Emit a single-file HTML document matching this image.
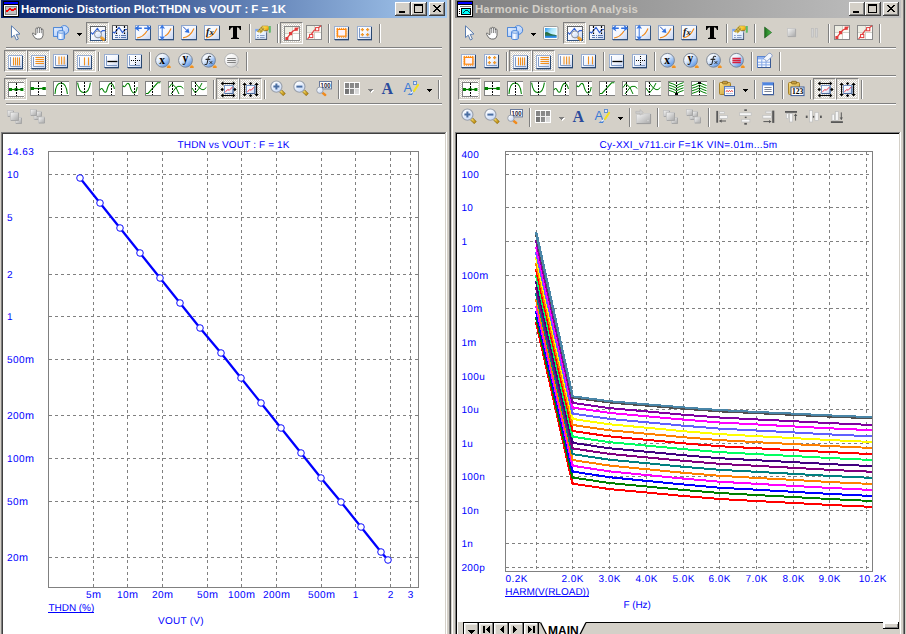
<!DOCTYPE html>
<html><head><meta charset="utf-8"><title>Harmonic Distortion</title>
<style>
html,body{margin:0;padding:0}
body{width:906px;height:634px;background:#d4d0c8;position:relative;overflow:hidden;font-family:"Liberation Sans",sans-serif}
body>div,body>svg{position:absolute}
.ic{position:absolute;overflow:visible}
.ttl{font-weight:bold;font-size:11.4px;line-height:14px;white-space:nowrap;letter-spacing:0px}
.cb{width:16px;height:14px;background:#d4d0c8;box-sizing:border-box;box-shadow:inset -1px -1px 0 #404040,inset 1px 1px 0 #fff,inset -2px -2px 0 #808080}
.cb svg{display:block}
.sb{width:15px;height:11px;background:#d4d0c8;box-shadow:inset -1px 0 0 #000,inset -2px 0 0 #808080,inset 1px 1px 0 #fff,inset 2px 2px 0 #ebe9e4}
.sb svg{display:block}
.chk{width:23px;height:22px;box-sizing:border-box;border:1px solid;border-color:#808080 #fff #fff #808080;box-shadow:inset 0 0 0 1px #d4d0c8;
background-color:#fff;background-image:linear-gradient(45deg,#d4d0c8 25%,transparent 25%,transparent 75%,#d4d0c8 75%),linear-gradient(45deg,#d4d0c8 25%,transparent 25%,transparent 75%,#d4d0c8 75%);background-size:2px 2px;background-position:0 0,1px 1px}
</style></head><body>
<svg width="0" height="0" style="position:absolute"><defs>

<linearGradient id="gPanel" x1="0" y1="0" x2="1" y2="1"><stop offset="0" stop-color="#ffffff"/><stop offset="0.5" stop-color="#f4f7fe"/><stop offset="1" stop-color="#c4d2f0"/></linearGradient>
<linearGradient id="gBall" x1="0.15" y1="0.1" x2="0.85" y2="0.95"><stop offset="0" stop-color="#ffffff"/><stop offset="0.35" stop-color="#e4eefc"/><stop offset="1" stop-color="#4f8ee6"/></linearGradient>
<linearGradient id="gBallG" x1="0.15" y1="0.1" x2="0.85" y2="0.95"><stop offset="0" stop-color="#ffffff"/><stop offset="0.5" stop-color="#f0f0f0"/><stop offset="1" stop-color="#c8c8c8"/></linearGradient>
<linearGradient id="gGlass" x1="0.2" y1="0.1" x2="0.8" y2="0.9"><stop offset="0" stop-color="#ffffff"/><stop offset="1" stop-color="#c8daf8"/></linearGradient>
<linearGradient id="gGray" x1="0" y1="0" x2="1" y2="1"><stop offset="0" stop-color="#f4f4f4"/><stop offset="1" stop-color="#a8a8a8"/></linearGradient>
<linearGradient id="gShape" x1="0" y1="0" x2="1" y2="1"><stop offset="0" stop-color="#e8f1ff"/><stop offset="1" stop-color="#a9c8f8"/></linearGradient>
<linearGradient id="gCyl" x1="0" y1="0" x2="1" y2="0"><stop offset="0" stop-color="#b8d2fb"/><stop offset="0.4" stop-color="#ffffff"/><stop offset="1" stop-color="#8ab2f0"/></linearGradient>
<linearGradient id="gGold" x1="0" y1="0" x2="1" y2="1"><stop offset="0" stop-color="#f6dc6a"/><stop offset="1" stop-color="#b8860b"/></linearGradient>
<linearGradient id="gPic" x1="0" y1="0" x2="0" y2="1"><stop offset="0" stop-color="#bfe6fb"/><stop offset="0.45" stop-color="#58b4ee"/><stop offset="0.6" stop-color="#2f7a4a"/><stop offset="1" stop-color="#1f6fd0"/></linearGradient>
<linearGradient id="gSky" x1="0" y1="0" x2="1" y2="0.6"><stop offset="0" stop-color="#2f98f0"/><stop offset="0.5" stop-color="#a8e4fb"/><stop offset="1" stop-color="#dffaff"/></linearGradient><linearGradient id="gWater" x1="0" y1="0" x2="0" y2="1"><stop offset="0" stop-color="#1f7ad8"/><stop offset="1" stop-color="#4aa4f0"/></linearGradient>
<linearGradient id="gDoc" x1="0" y1="0" x2="1" y2="1"><stop offset="0" stop-color="#ffffff"/><stop offset="1" stop-color="#d4e4fb"/></linearGradient><linearGradient id="gHand" x1="0" y1="0" x2="1" y2="0.6"><stop offset="0" stop-color="#fbe460"/><stop offset="0.6" stop-color="#f8c830"/><stop offset="1" stop-color="#ee9a10"/></linearGradient><pattern id="pHatch" width="1.4" height="1.4" patternUnits="userSpaceOnUse"><rect x="0" y="0" width="0.7" height="0.7" fill="#8a6a18"/><rect x="0.7" y="0.7" width="0.7" height="0.7" fill="#8a6a18"/></pattern>
<linearGradient id="gPlay" x1="0" y1="0" x2="1" y2="0"><stop offset="0" stop-color="#1d6e1d"/><stop offset="1" stop-color="#4fc24f"/></linearGradient>
<linearGradient id="gCellHi" x1="0" y1="0" x2="1" y2="1"><stop offset="0" stop-color="#000" stop-opacity="0.08"/><stop offset="1" stop-color="#fff" stop-opacity="0.15"/></linearGradient>
<linearGradient id="gCell" x1="0" y1="0" x2="1" y2="1"><stop offset="0" stop-color="#808080"/><stop offset="0.6" stop-color="#9a9a9a"/><stop offset="1" stop-color="#dcdcdc"/></linearGradient>
<linearGradient id="gClip" x1="0" y1="0" x2="1" y2="1"><stop offset="0" stop-color="#f8e08a"/><stop offset="1" stop-color="#c89a2a"/></linearGradient>

<symbol id="appL" viewBox="0 0 16 16" overflow="visible"><g shape-rendering="crispEdges"><rect x="0" y="0" width="16" height="16" fill="#000"/><rect x="1" y="1" width="14" height="2" fill="#0000ff"/><rect x="1" y="4" width="14" height="11" fill="#fff"/><rect x="2" y="5" width="12" height="9" fill="#808080"/><rect x="3" y="6" width="10" height="7" fill="#c0c0c0"/><path d="M3 9h2v2h-2zM5 8h1v2h-1zM6 7h2v2h-2zM8 8h3v2h-3zM11 7h2v2h-2z" fill="#ff0000"/></g></symbol>
<symbol id="appR" viewBox="0 0 16 16" overflow="visible"><g shape-rendering="crispEdges"><rect x="0" y="0" width="16" height="16" fill="#000"/><rect x="1" y="1" width="14" height="2" fill="#0000ff"/><rect x="1" y="4" width="14" height="11" fill="#fff"/><rect x="3" y="5" width="11" height="1" fill="#808080"/><rect x="2" y="8" width="1" height="1" fill="#000"/><rect x="2" y="10" width="1" height="1" fill="#000"/><rect x="2" y="12" width="1" height="1" fill="#000"/><rect x="4" y="7" width="10" height="7" fill="#000"/><rect x="5" y="8" width="8" height="5" fill="#00ffff"/><path d="M6 12h1v-1h1v-1h3v1h1v1h1v-1h-1v-1h-1v-1h-3v1h-1v1h-1z" fill="#004040"/></g></symbol>
<symbol id="arrow" viewBox="0 0 16 16" overflow="visible"><path d="M4.5 0.8 L4.5 12.6 L7.2 10.2 L9.4 15 L11.4 14 L9.2 9.4 L13 9 Z" fill="#fff" stroke="#5a7cae" stroke-width="1" stroke-linejoin="round"/></symbol>
<symbol id="hand" viewBox="0 0 16 16" overflow="visible"><g fill="#fff" stroke="#5c5c5c" stroke-width="0.9" stroke-linejoin="round"><path d="M4.9 9.6 L3.4 8 Q2.6 7.6 2.5 8.6 Q2.6 9.6 3.6 11 Q5 13.9 7.4 14 H10 Q12.6 13.6 13 10.4 V5 Q13 4 12.1 4 Q11.3 4 11.3 5 V3.6 Q11.3 2.7 10.4 2.7 Q9.5 2.7 9.5 3.6 V3.2 Q9.5 2.3 8.6 2.3 Q7.7 2.3 7.7 3.2 V3.8 Q7.7 3 6.8 3 Q5.9 3 5.9 3.9 V9.6 Z"/></g><path d="M7.7 4v4.2M9.5 3.6v4.4M11.3 5v3.2" stroke="#6e6e6e" stroke-width="0.8"/></symbol>
<symbol id="shapes" viewBox="0 0 16 16" overflow="visible"><circle cx="11.3" cy="5" r="4.4" fill="url(#gShape)" stroke="#3c7cd6" stroke-width="0.9"/><rect x="0.6" y="2.6" width="9" height="8.8" fill="url(#gShape)" stroke="#3c7cd6" stroke-width="0.9"/><path d="M4.6 7 v6.4 a3.4 1.2 0 0 0 6.8 0 V7 a3.4 1.2 0 0 0 -6.8 0 z" fill="url(#gCyl)" stroke="#3c7cd6" stroke-width="0.9"/><ellipse cx="8" cy="7" rx="3.4" ry="1.2" fill="#e8f2ff" stroke="#3c7cd6" stroke-width="0.8"/></symbol>
<symbol id="zoomwin" viewBox="0 0 16 16" overflow="visible"><rect x="0.5" y="0.5" width="15" height="14" fill="url(#gPanel)" stroke="#5f6266"/><path d="M15.5 7v8M0.5 7v8M0.5 14.5h15" stroke="#34547f" stroke-width="1" fill="none"/><path d="M1 6.4 L2.6 8.2 L7.4 2.4 L10.4 6.6 L12.6 4.6 H15" stroke="#3060d4" stroke-width="1.05" fill="none"/><path d="M11.6 11.8 L13.4 13.4" stroke="#e8931a" stroke-width="3" stroke-linecap="round"/><path d="M11.8 11.4 L13.4 12.8" stroke="#f8c060" stroke-width="0.9" stroke-linecap="round"/><circle cx="8" cy="8.4" r="3.5" fill="url(#gGlass)" stroke="#8a8f98" stroke-width="1"/></symbol>
<symbol id="chartgrid" viewBox="0 0 16 16" overflow="visible"><rect x="0.5" y="0.5" width="15" height="14" fill="url(#gPanel)" stroke="#5f6266"/><path d="M15.5 7v8M0.5 7v8M0.5 14.5h15" stroke="#34547f" stroke-width="1" fill="none"/><path d="M1 7 L2.5 8 L7 2.4 L10.5 7.6 L13 4.5 H15" stroke="#2c5cd0" stroke-width="1.2" fill="none"/><path d="M4.5 1v8M12.5 1v8" stroke="#000" stroke-width="1.2" stroke-dasharray="2 1.2"/><path d="M3 10.5h3M7 10.5h1M9 10.5h5M3 12.5h3M7 12.5h1M9 12.5h5" stroke="#5878b0" stroke-width="1"/></symbol>
<symbol id="panx" viewBox="0 0 16 16" overflow="visible"><rect x="0.5" y="0.5" width="15" height="14" fill="url(#gPanel)" stroke="#8ea6cc"/><path d="M15.5 1v14M0.5 14.5h15.5" stroke="#34547f" stroke-width="1" fill="none"/><path d="M1 15.5h15" stroke="#7f8ea6" stroke-width="1" opacity="0.6"/><path d="M2 13 Q8 12.4 12 6" stroke="#f08a1c" stroke-width="1.2" fill="none"/><path d="M-0.4 3.2 L4.4 0 L3.4 2.4 H6.8 V4 H3.4 L4.4 6.4 Z M16.4 3.2 L11.6 0 L12.6 2.4 H9.2 V4 H12.6 L11.6 6.4 Z" fill="#2f6fe0"/></symbol>
<symbol id="pany" viewBox="0 0 16 16" overflow="visible"><rect x="0.5" y="0.5" width="15" height="14" fill="url(#gPanel)" stroke="#8ea6cc"/><path d="M15.5 1v14M0.5 14.5h15.5" stroke="#34547f" stroke-width="1" fill="none"/><path d="M1 15.5h15" stroke="#7f8ea6" stroke-width="1" opacity="0.6"/><path d="M7 11 Q10.6 9 13 3.4" stroke="#f08a1c" stroke-width="1.2" fill="none"/><path d="M4.2 -0.4 L1.4 3.8 L3.7 3.2 V11.8 L1.4 11.2 L4.2 15.4 L7 11.2 L4.7 11.8 V3.2 L7 3.8 Z" fill="#3a78e4"/></symbol>
<symbol id="panxy" viewBox="0 0 16 16" overflow="visible"><rect x="0.5" y="0.5" width="15" height="14" fill="url(#gPanel)" stroke="#8ea6cc"/><path d="M15.5 1v14M0.5 14.5h15.5" stroke="#34547f" stroke-width="1" fill="none"/><path d="M1 15.5h15" stroke="#7f8ea6" stroke-width="1" opacity="0.6"/><path d="M2 12.8 Q9 12 13 3.4" stroke="#f08a1c" stroke-width="1.2" fill="none"/><path d="M2 1.6 L6 5.6" stroke="#2050c0" stroke-width="1"/><path d="M8.4 8 L3.6 7 L7.4 3.2 Z" fill="#2f6fe0"/></symbol>
<symbol id="fx" viewBox="0 0 16 16" overflow="visible"><rect x="0.5" y="0.5" width="15" height="14" fill="url(#gPanel)" stroke="#8ea6cc"/><path d="M15.5 1v14M0.5 14.5h15.5" stroke="#34547f" stroke-width="1" fill="none"/><path d="M1 15.5h15" stroke="#7f8ea6" stroke-width="1" opacity="0.6"/><path d="M2 13 Q9 12 13 3.6" stroke="#f08a1c" stroke-width="1.2" fill="none"/><text x="2" y="9.8" font-family="Liberation Serif, serif" font-style="italic" font-weight="bold" font-size="10.4px" fill="#111">f</text><text x="5.6" y="10.2" font-family="Liberation Serif, serif" font-style="italic" font-weight="bold" font-size="8.6px" fill="#111">x</text></symbol>
<symbol id="T" viewBox="0 0 16 16" overflow="visible"><path d="M2 1 H14 V5 H13 Q12.6 2.4 10 2.2 V12 Q10 13 12 13 V14 H4 V13 Q6 13 6 12 V2.2 Q3.4 2.4 3 5 H2 Z" fill="#000"/></symbol>
<symbol id="props" viewBox="0 0 16 16" overflow="visible"><rect x="0.5" y="4.3" width="11" height="10" fill="url(#gDoc)" stroke="#a8c0e8"/><rect x="0.4" y="4" width="4.6" height="2.4" fill="#7aa4f0"/><path d="M11.6 7.4V14.6" stroke="#4a5a74" stroke-width="0.9"/><path d="M0.3 14.45H12" stroke="#3a4a60" stroke-width="0.9"/><path d="M2 10.5h1.8M5 10.5h4.6M2 12.5h1.8M5 12.5h4.6" stroke="#8aa0c8" stroke-width="1"/><path d="M9.2 5.7H12.6" stroke="#2a2a2a" stroke-width="0.9"/><path d="M7.2 0.9 H12.4 Q14 1.1 13.9 3.3 Q13.7 5.3 12.2 5.4 H9.4 L7 3.8 Z" fill="url(#gHand)" stroke="#9a7410" stroke-width="0.4"/><path d="M7.4 0.9 L10 4.6 L5.6 8.4 L4.5 7 L3.1 7.4 L2.1 6.3 L6 2 Z" fill="#f4dc6a"/><path d="M7.4 0.9 L10 4.6 L5.6 8.4 L4.5 7 L3.1 7.4 L2.1 6.3 L6 2 Z" fill="url(#pHatch)"/><rect x="13.9" y="1" width="1.7" height="6.6" fill="#36b048"/><rect x="13.9" y="1" width="0.6" height="6.6" fill="#7ad088"/></symbol>
<symbol id="pts1" viewBox="0 0 16 16" overflow="visible"><rect x="0.5" y="0.5" width="15" height="14" fill="#fbfaf4" stroke="#8a8a8a"/><rect x="1" y="1" width="7" height="7" fill="#eeeee4"/><rect x="8" y="8" width="7" height="6" fill="#ffffff"/><path d="M8.5 1v13M1 7.5h14" stroke="#d2d2c8" stroke-width="1"/><path d="M2 13.4 L6 8.4 Q8 4.6 12.6 3.2 L14.6 1.6" stroke="#e23a3a" stroke-width="1.2" fill="none"/><rect x="1.4" y="11" width="3" height="3" fill="#e23a3a"/><rect x="5" y="6" width="3.2" height="3.2" fill="#e23a3a"/><rect x="10.6" y="1.6" width="3.2" height="3.2" fill="#e23a3a"/></symbol>
<symbol id="pts2" viewBox="0 0 16 16" overflow="visible"><rect x="0.5" y="0.5" width="15" height="14" fill="#fbfaf4" stroke="#8a8a8a"/><rect x="1" y="1" width="7" height="7" fill="#eeeee4"/><rect x="8" y="8" width="7" height="6" fill="#ffffff"/><path d="M8.5 1v13M1 7.5h14" stroke="#d2d2c8" stroke-width="1"/><path d="M1.6 14 L6 8.4 Q8 4.6 12 3 L15 0.8" stroke="#e23a3a" stroke-width="1.2" fill="none"/><rect x="3.6" y="9.4" width="3.2" height="3.2" fill="#fff" stroke="#e23a3a" stroke-width="1"/><rect x="9.6" y="2.6" width="3.2" height="3.2" fill="#fff" stroke="#e23a3a" stroke-width="1"/></symbol>
<symbol id="frame1" viewBox="0 0 16 16" overflow="visible"><rect x="0.5" y="1.5" width="14" height="13" fill="url(#gPanel)" stroke="#9bb0d2"/><path d="M14.5 2v13M0.5 14.5h14.5" stroke="#2a4870" stroke-width="1" fill="none"/><path d="M1 15.4h14" stroke="#5a6f90" stroke-width="0.8" opacity="0.7"/><rect x="3.6" y="4.4" width="8.2" height="6.8" fill="#fdf4fb" stroke="#ff8a10" stroke-width="1.2"/><path d="M3 3.4h9.6M3 12.2h9.6" stroke="#ff8a10" stroke-width="1" stroke-dasharray="1 1"/><path d="M2.6 3.6v8.6M12.8 3.6v8.6" stroke="#ff8a10" stroke-width="1" stroke-dasharray="1 1"/></symbol>
<symbol id="frame2" viewBox="0 0 16 16" overflow="visible"><rect x="0.5" y="1.5" width="14" height="13" fill="url(#gPanel)" stroke="#9bb0d2"/><path d="M14.5 2v13M0.5 14.5h14.5" stroke="#2a4870" stroke-width="1" fill="none"/><path d="M1 15.4h14" stroke="#5a6f90" stroke-width="0.8" opacity="0.7"/><path d="M2.5 3v9.5h10.5" stroke="#7f9ac6" stroke-width="1" fill="none"/><path d="M3.8000000000000003 4.6h3.2M5.4 2.9999999999999996v3.2" stroke="#f09a30" stroke-width="1.3"/><path d="M9.0 4.6h3.2M10.6 2.9999999999999996v3.2" stroke="#f09a30" stroke-width="1.3"/><path d="M3.8000000000000003 9.6h3.2M5.4 8.0v3.2" stroke="#f09a30" stroke-width="1.3"/><path d="M9.0 9.6h3.2M10.6 8.0v3.2" stroke="#f09a30" stroke-width="1.3"/></symbol>
<symbol id="bars4" viewBox="0 0 16 16" overflow="visible"><rect x="0.5" y="1.5" width="14" height="13" fill="url(#gPanel)" stroke="#9bb0d2"/><path d="M14.5 2v13M0.5 14.5h14.5" stroke="#2a4870" stroke-width="1" fill="none"/><path d="M1 15.4h14" stroke="#5a6f90" stroke-width="0.8" opacity="0.7"/><path d="M2.5 3v9.5h10.5" stroke="#7f9ac6" stroke-width="1" fill="none"/><path d="M5.5 3.4v8" stroke="#f09020" stroke-width="1.1"/><path d="M7.5 3.4v8" stroke="#f09020" stroke-width="1.1"/><path d="M9.5 3.4v8" stroke="#f09020" stroke-width="1.1"/><path d="M11.5 3.4v8" stroke="#f09020" stroke-width="1.1"/></symbol>
<symbol id="hbars" viewBox="0 0 16 16" overflow="visible"><rect x="0.5" y="1.5" width="14" height="13" fill="url(#gPanel)" stroke="#9bb0d2"/><path d="M14.5 2v13M0.5 14.5h14.5" stroke="#2a4870" stroke-width="1" fill="none"/><path d="M1 15.4h14" stroke="#5a6f90" stroke-width="0.8" opacity="0.7"/><path d="M2.5 3v9.5h10.5" stroke="#7f9ac6" stroke-width="1" fill="none"/><path d="M4.4 3.5h8.6" stroke="#f09020" stroke-width="1.1"/><path d="M4.4 5.5h8.6" stroke="#f09020" stroke-width="1.1"/><path d="M4.4 7.5h8.6" stroke="#f09020" stroke-width="1.1"/><path d="M4.4 9.5h8.6" stroke="#f09020" stroke-width="1.1"/></symbol>
<symbol id="bars3" viewBox="0 0 16 16" overflow="visible"><rect x="0.5" y="1.5" width="14" height="13" fill="url(#gPanel)" stroke="#9bb0d2"/><path d="M14.5 2v13M0.5 14.5h14.5" stroke="#2a4870" stroke-width="1" fill="none"/><path d="M1 15.4h14" stroke="#5a6f90" stroke-width="0.8" opacity="0.7"/><path d="M2.5 3v9.5h10.5" stroke="#7f9ac6" stroke-width="1" fill="none"/><path d="M6 3.4v8" stroke="#f09020" stroke-width="1.1"/><path d="M8.6 3.4v8" stroke="#f09020" stroke-width="1.1"/><path d="M11.2 3.4v8" stroke="#f09020" stroke-width="1.1"/></symbol>
<symbol id="bars2" viewBox="0 0 16 16" overflow="visible"><rect x="0.5" y="1.5" width="14" height="13" fill="url(#gPanel)" stroke="#9bb0d2"/><path d="M14.5 2v13M0.5 14.5h14.5" stroke="#2a4870" stroke-width="1" fill="none"/><path d="M1 15.4h14" stroke="#5a6f90" stroke-width="0.8" opacity="0.7"/><path d="M2.5 3v9.5h10.5" stroke="#7f9ac6" stroke-width="1" fill="none"/><path d="M7.5 3.4v8" stroke="#f09020" stroke-width="1.1"/><path d="M11.5 3.4v8" stroke="#f09020" stroke-width="1.1"/></symbol>
<symbol id="hline" viewBox="0 0 16 16" overflow="visible"><rect x="0.5" y="1.5" width="14" height="13" fill="url(#gPanel)" stroke="#9bb0d2"/><path d="M14.5 2v13M0.5 14.5h14.5" stroke="#2a4870" stroke-width="1" fill="none"/><path d="M1 15.4h14" stroke="#5a6f90" stroke-width="0.8" opacity="0.7"/><path d="M2.5 3v9.5h10.5" stroke="#7f9ac6" stroke-width="1" fill="none"/><path d="M3.4 8.5h10" stroke="#000" stroke-width="1.3"/></symbol>
<symbol id="cross" viewBox="0 0 16 16" overflow="visible"><rect x="0.5" y="1.5" width="14" height="13" fill="url(#gPanel)" stroke="#9bb0d2"/><path d="M14.5 2v13M0.5 14.5h14.5" stroke="#2a4870" stroke-width="1" fill="none"/><path d="M1 15.4h14" stroke="#5a6f90" stroke-width="0.8" opacity="0.7"/><path d="M2.5 3v9.5h10.5" stroke="#7f9ac6" stroke-width="1" fill="none"/><g fill="#000" shape-rendering="crispEdges"><rect x="4" y="7" width="1" height="1"/><rect x="6" y="7" width="1" height="1"/><rect x="10" y="7" width="1" height="1"/><rect x="12" y="7" width="1" height="1"/><rect x="8" y="3" width="1" height="1"/><rect x="8" y="5" width="1" height="1"/><rect x="8" y="7" width="1" height="1"/><rect x="8" y="9" width="1" height="1"/><rect x="8" y="11" width="1" height="1"/></g></symbol>
<symbol id="bx" viewBox="0 0 16 16" overflow="visible"><circle cx="7.5" cy="7.3" r="6.9" fill="url(#gBall)" stroke="#7d8796" stroke-width="1"/><path d="M11.9 15 V13.6 L13.8 11.7 L15.7 13.6 V15 Z" fill="#f09020"/><path d="M12.6 13.4 L13.8 12.2 L15 13.4" stroke="#f8c070" stroke-width="0.7" fill="none"/><text x="4.2" y="10.6" font-family="Liberation Serif, serif" font-weight="bold" font-size="11.5px" fill="#000">x</text></symbol>
<symbol id="by" viewBox="0 0 16 16" overflow="visible"><circle cx="7.5" cy="7.3" r="6.9" fill="url(#gBall)" stroke="#7d8796" stroke-width="1"/><path d="M11.9 15 V13.6 L13.8 11.7 L15.7 13.6 V15 Z" fill="#f09020"/><path d="M12.6 13.4 L13.8 12.2 L15 13.4" stroke="#f8c070" stroke-width="0.7" fill="none"/><text x="4.6" y="9" font-family="Liberation Serif, serif" font-weight="bold" font-size="11.5px" fill="#000">y</text></symbol>
<symbol id="bfx" viewBox="0 0 16 16" overflow="visible"><circle cx="7.5" cy="7.3" r="6.9" fill="url(#gBall)" stroke="#7d8796" stroke-width="1"/><path d="M11.9 15 V13.6 L13.8 11.7 L15.7 13.6 V15 Z" fill="#f09020"/><path d="M12.6 13.4 L13.8 12.2 L15 13.4" stroke="#f8c070" stroke-width="0.7" fill="none"/><path d="M9.6 3.4 Q7.6 2.6 7.2 5 L6.2 10 Q5.8 12 4 11.4 M5 6.4 H8.8" stroke="#2a2a2a" stroke-width="1.1" fill="none" stroke-linecap="round"/><path d="M8.6 8.2 L11.2 10.8 M11.2 8.2 L8.6 10.8" stroke="#2a2a2a" stroke-width="1"/></symbol>
<symbol id="blines_g" viewBox="0 0 16 16" overflow="visible"><circle cx="7.5" cy="7.3" r="6.9" fill="url(#gBallG)" stroke="#b4b4b4" stroke-width="1"/><path d="M3.2 5.5h8.6M3.2 7.5h8.6M3.2 9.5h8.6" stroke="#808080" stroke-width="1"/><path d="M12 13 L14.6 15" stroke="#c0c0c0" stroke-width="1.2"/></symbol>
<symbol id="blines_r" viewBox="0 0 16 16" overflow="visible"><circle cx="7.5" cy="7.3" r="6.9" fill="url(#gBall)" stroke="#7d8796" stroke-width="1"/><path d="M11.9 15 V13.6 L13.8 11.7 L15.7 13.6 V15 Z" fill="#f09020"/><path d="M12.6 13.4 L13.8 12.2 L15 13.4" stroke="#f8c070" stroke-width="0.7" fill="none"/><path d="M3.4 5.5h8.4M3.4 7.5h8.4M3.4 9.5h8.4" stroke="#d81e3c" stroke-width="1.5"/></symbol>
<symbol id="table" viewBox="0 0 16 16" overflow="visible"><rect x="0.5" y="3.5" width="13" height="11" fill="#f6f9ff" stroke="#5a84d0"/><rect x="1" y="4" width="12" height="2.4" fill="#8fb2f2"/><path d="M4.8 6.4v8M9 6.4v8M1 9.2h12M1 11.9h12" stroke="#86a8e6" stroke-width="1"/><path d="M13.5 4v10.5H1" stroke="#3a5a94" stroke-width="1" fill="none"/><path d="M6.4 5.6 L11.8 0.4 Q13 -0.2 14 0.8 L15 2 Q15.6 3 14.8 3.8 L9.8 8.4 Z" fill="#f4f7fd" stroke="#7a92c4" stroke-width="0.8"/><path d="M7 6 L9.6 8" stroke="#a8b8dc" stroke-width="1"/></symbol>
<symbol id="c1" viewBox="0 0 16 16" overflow="visible"><g shape-rendering="crispEdges"><rect x="0" y="1" width="16" height="13" fill="#fff"/><rect x="0" y="0" width="1" height="15" fill="#808080"/><rect x="0" y="0" width="16" height="1" fill="#808080"/><rect x="0" y="14" width="16" height="1" fill="#808080"/></g><path d="M1 7.5h14" stroke="#008000" stroke-width="1.2"/><rect x="1" y="6" width="3" height="3" fill="#008000"/><rect x="6.6" y="6" width="3" height="3" fill="#008000"/><rect x="12.4" y="6" width="3" height="3" fill="#008000"/><g fill="#000" shape-rendering="crispEdges"><rect x="8" y="1" width="1" height="2"/><rect x="8" y="4" width="1" height="2"/><rect x="8" y="7" width="1" height="2"/><rect x="8" y="10" width="1" height="2"/><rect x="8" y="13" width="1" height="1"/></g></symbol>
<symbol id="c2" viewBox="0 0 16 16" overflow="visible"><g shape-rendering="crispEdges"><rect x="0" y="1" width="16" height="13" fill="#fff"/><rect x="0" y="0" width="1" height="15" fill="#808080"/><rect x="0" y="0" width="16" height="1" fill="#808080"/><rect x="0" y="14" width="16" height="1" fill="#808080"/></g><path d="M1 7.5h14" stroke="#008000" stroke-width="1.2"/><rect x="0.6" y="6" width="3.4" height="3" fill="#008000"/><rect x="12.4" y="6" width="3.4" height="3" fill="#008000"/><g fill="#000" shape-rendering="crispEdges"><rect x="8" y="1" width="1" height="2"/><rect x="8" y="4" width="1" height="2"/><rect x="8" y="7" width="1" height="2"/><rect x="8" y="10" width="1" height="2"/><rect x="8" y="13" width="1" height="1"/></g></symbol>
<symbol id="c3" viewBox="0 0 16 16" overflow="visible"><g shape-rendering="crispEdges"><rect x="0" y="1" width="16" height="13" fill="#fff"/><rect x="0" y="0" width="1" height="15" fill="#808080"/><rect x="0" y="0" width="16" height="1" fill="#808080"/><rect x="0" y="14" width="16" height="1" fill="#808080"/></g><path d="M2 13 Q2.6 2 8 2 T14.4 13" stroke="#008000" stroke-width="1.05" fill="none"/><g fill="#000" shape-rendering="crispEdges"><rect x="8" y="1" width="1" height="2"/><rect x="8" y="4" width="1" height="2"/><rect x="8" y="7" width="1" height="2"/><rect x="8" y="10" width="1" height="2"/><rect x="8" y="13" width="1" height="1"/></g></symbol>
<symbol id="c4" viewBox="0 0 16 16" overflow="visible"><g shape-rendering="crispEdges"><rect x="0" y="1" width="16" height="13" fill="#fff"/><rect x="0" y="0" width="1" height="15" fill="#808080"/><rect x="0" y="0" width="16" height="1" fill="#808080"/><rect x="0" y="14" width="16" height="1" fill="#808080"/></g><path d="M1.6 1.6 Q3 11.6 8 11.6 T14.4 1.6" stroke="#008000" stroke-width="1.05" fill="none"/><g fill="#000" shape-rendering="crispEdges"><rect x="8" y="1" width="1" height="2"/><rect x="8" y="4" width="1" height="2"/><rect x="8" y="7" width="1" height="2"/><rect x="8" y="10" width="1" height="2"/><rect x="8" y="13" width="1" height="1"/></g></symbol>
<symbol id="c5" viewBox="0 0 16 16" overflow="visible"><g shape-rendering="crispEdges"><rect x="0" y="1" width="16" height="13" fill="#fff"/><rect x="0" y="0" width="1" height="15" fill="#808080"/><rect x="0" y="0" width="16" height="1" fill="#808080"/><rect x="0" y="14" width="16" height="1" fill="#808080"/></g><path d="M1 9 Q2.6 6 4.4 9.4 T7.6 10 Q9.6 2 12 2.4 T15.4 8" stroke="#008000" stroke-width="1.05" fill="none"/><g fill="#000" shape-rendering="crispEdges"><rect x="12" y="1" width="1" height="2"/><rect x="12" y="4" width="1" height="2"/><rect x="12" y="7" width="1" height="2"/><rect x="12" y="10" width="1" height="2"/><rect x="12" y="13" width="1" height="1"/></g></symbol>
<symbol id="c6" viewBox="0 0 16 16" overflow="visible"><g shape-rendering="crispEdges"><rect x="0" y="1" width="16" height="13" fill="#fff"/><rect x="0" y="0" width="1" height="15" fill="#808080"/><rect x="0" y="0" width="16" height="1" fill="#808080"/><rect x="0" y="14" width="16" height="1" fill="#808080"/></g><path d="M0.8 4.6 Q2.4 7 4 4 T7.4 3.6 Q9.6 12 12 12 T15.2 6" stroke="#008000" stroke-width="1.05" fill="none"/><g fill="#000" shape-rendering="crispEdges"><rect x="12" y="1" width="1" height="2"/><rect x="12" y="4" width="1" height="2"/><rect x="12" y="7" width="1" height="2"/><rect x="12" y="10" width="1" height="2"/><rect x="12" y="13" width="1" height="1"/></g></symbol>
<symbol id="c7" viewBox="0 0 16 16" overflow="visible"><g shape-rendering="crispEdges"><rect x="0" y="1" width="16" height="13" fill="#fff"/><rect x="0" y="0" width="1" height="15" fill="#808080"/><rect x="0" y="0" width="16" height="1" fill="#808080"/><rect x="0" y="14" width="16" height="1" fill="#808080"/></g><path d="M1 12.4 H3 L12.6 1.8 H15.4" stroke="#008000" stroke-width="1.05" fill="none"/><g fill="#000" shape-rendering="crispEdges"><rect x="7" y="1" width="1" height="2"/><rect x="7" y="4" width="1" height="2"/><rect x="7" y="7" width="1" height="2"/><rect x="7" y="10" width="1" height="2"/><rect x="7" y="13" width="1" height="1"/></g></symbol>
<symbol id="c8" viewBox="0 0 16 16" overflow="visible"><g shape-rendering="crispEdges"><rect x="0" y="1" width="16" height="13" fill="#fff"/><rect x="0" y="0" width="1" height="15" fill="#808080"/><rect x="0" y="0" width="16" height="1" fill="#808080"/><rect x="0" y="14" width="16" height="1" fill="#808080"/></g><path d="M1 6.6 L3.8 2.6 L8 6.6 L10 5.4 H13 L15.4 7.6" stroke="#008000" stroke-width="1" fill="none"/><path d="M3 13 L8 6.6 L11 13" stroke="#008000" stroke-width="1" fill="none"/><g fill="#000" shape-rendering="crispEdges"><rect x="4" y="1" width="1" height="2"/><rect x="4" y="4" width="1" height="2"/><rect x="4" y="7" width="1" height="2"/><rect x="4" y="10" width="1" height="2"/><rect x="4" y="13" width="1" height="1"/></g></symbol>
<symbol id="c9" viewBox="0 0 16 16" overflow="visible"><g shape-rendering="crispEdges"><rect x="0" y="1" width="16" height="13" fill="#fff"/><rect x="0" y="0" width="1" height="15" fill="#808080"/><rect x="0" y="0" width="16" height="1" fill="#808080"/><rect x="0" y="14" width="16" height="1" fill="#808080"/></g><path d="M1 7 L4.4 12 L8.4 7 L11 2" stroke="#008000" stroke-width="1" fill="none"/><path d="M4 1.6 L8.4 7 L11 8.6 H13 L15.4 6.4" stroke="#008000" stroke-width="1" fill="none"/><g fill="#000" shape-rendering="crispEdges"><rect x="4" y="1" width="1" height="2"/><rect x="4" y="4" width="1" height="2"/><rect x="4" y="7" width="1" height="2"/><rect x="4" y="10" width="1" height="2"/><rect x="4" y="13" width="1" height="1"/></g></symbol>
<symbol id="c10" viewBox="0 0 16 16" overflow="visible"><g shape-rendering="crispEdges"><rect x="0" y="1" width="16" height="13" fill="#fff"/><rect x="0" y="0" width="1" height="15" fill="#808080"/><rect x="0" y="0" width="16" height="1" fill="#808080"/><rect x="0" y="14" width="16" height="1" fill="#808080"/></g><path d="M1 1.6 Q5 2.6 8.5 4.6 Q12 2.6 15.6 1.6" stroke="#008000" stroke-width="1" fill="none"/><path d="M1 4.2 Q5 5.2 8.5 7.2 Q12 5.2 15.6 4.2" stroke="#008000" stroke-width="1" fill="none"/><path d="M1 6.8 Q5 7.8 8.5 9.8 Q12 7.8 15.6 6.8" stroke="#008000" stroke-width="1" fill="none"/><path d="M1 9.4 Q5 10.4 8.5 12.4 Q12 10.4 15.6 9.4" stroke="#008000" stroke-width="1" fill="none"/><g fill="#000" shape-rendering="crispEdges"><rect x="8" y="1" width="1" height="2"/><rect x="8" y="4" width="1" height="2"/><rect x="8" y="7" width="1" height="2"/><rect x="8" y="10" width="1" height="2"/><rect x="8" y="13" width="1" height="1"/></g><rect x="7" y="12" width="3" height="2" fill="#000"/></symbol>
<symbol id="c11" viewBox="0 0 16 16" overflow="visible"><g shape-rendering="crispEdges"><rect x="0" y="1" width="16" height="13" fill="#fff"/><rect x="0" y="0" width="1" height="15" fill="#808080"/><rect x="0" y="0" width="16" height="1" fill="#808080"/><rect x="0" y="14" width="16" height="1" fill="#808080"/></g><path d="M1 4.6 Q5 3.6 8.5 1.6 Q12 3.6 15.6 4.6" stroke="#008000" stroke-width="1" fill="none"/><path d="M1 7.2 Q5 6.2 8.5 4.2 Q12 6.2 15.6 7.2" stroke="#008000" stroke-width="1" fill="none"/><path d="M1 9.8 Q5 8.8 8.5 6.8 Q12 8.8 15.6 9.8" stroke="#008000" stroke-width="1" fill="none"/><path d="M1 12.4 Q5 11.4 8.5 9.4 Q12 11.4 15.6 12.4" stroke="#008000" stroke-width="1" fill="none"/><g fill="#000" shape-rendering="crispEdges"><rect x="8" y="1" width="1" height="2"/><rect x="8" y="4" width="1" height="2"/><rect x="8" y="7" width="1" height="2"/><rect x="8" y="10" width="1" height="2"/><rect x="8" y="13" width="1" height="1"/></g><rect x="7" y="1" width="3" height="2" fill="#000"/></symbol>
<symbol id="fith" viewBox="0 0 16 16" overflow="visible"><path d="M2.3 1.5H13.9" stroke="#000" stroke-width="1.1"/><path d="M0.8 1.5l2.6-2.2v4.4zM15.4 1.5l-2.6-2.2v4.4z" fill="#000"/><path d="M2.3 13.5H13.9" stroke="#000" stroke-width="1.1"/><path d="M0.8 13.5l2.6-2.2v4.4zM15.4 13.5l-2.6-2.2v4.4z" fill="#000"/><rect x="4.5" y="3.5" width="8.6" height="8" fill="url(#gPanel)" stroke="#7a98c8"/><path d="M13.1 4.0V11.5H5.0" stroke="#4a6898" stroke-width="1" fill="none"/><path d="M5.3 9.9 L7.9399999999999995 7.5 L9.23 8.3 L12.299999999999999 5.1" stroke="#f03048" stroke-width="0.95" fill="none"/><path d="M0.5000000000000002 7.5L2.2 5.8L3.9000000000000004 7.5L2.2 9.2Z" fill="#000"/><path d="M13.100000000000001 7.5L14.8 5.8L16.5 7.5L14.8 9.2Z" fill="#000"/></symbol>
<symbol id="fitv" viewBox="0 0 16 16" overflow="visible"><path d="M1.6 1.9V13.1" stroke="#000" stroke-width="1.1"/><path d="M1.6 0.4l-2.2 2.6h4.4zM1.6 14.6l-2.2-2.6h4.4z" fill="#000"/><path d="M13.6 1.9V13.1" stroke="#000" stroke-width="1.1"/><path d="M13.6 0.4l-2.2 2.6h4.4zM13.6 14.6l-2.2-2.6h4.4z" fill="#000"/><rect x="3.5" y="3.5" width="8.4" height="8" fill="url(#gPanel)" stroke="#7a98c8"/><path d="M11.9 4.0V11.5H4.0" stroke="#4a6898" stroke-width="1" fill="none"/><path d="M4.3 9.9 L6.86 7.5 L8.120000000000001 8.3 L11.1 5.1" stroke="#f03048" stroke-width="0.95" fill="none"/><path d="M5.8999999999999995 1.6L7.6 -0.09999999999999987L9.299999999999999 1.6L7.6 3.3Z" fill="#000"/><path d="M5.8999999999999995 13.6L7.6 11.9L9.299999999999999 13.6L7.6 15.299999999999999Z" fill="#000"/></symbol>
<symbol id="zin" viewBox="0 0 16 16" overflow="visible"><path d="M10.6 10 L14.4 13.8" stroke="#8a6a14" stroke-width="3.6" stroke-linecap="butt"/><path d="M10.6 10 L14.2 13.6" stroke="url(#gGold)" stroke-width="2.4" stroke-linecap="butt"/><circle cx="6.4" cy="5.6" r="5.6" fill="url(#gGlass)" stroke="#9aa0aa" stroke-width="1.1"/><path d="M3.4 5.6h6M6.4 2.6v6" stroke="#4a6ea2" stroke-width="2"/></symbol>
<symbol id="zout" viewBox="0 0 16 16" overflow="visible"><path d="M10.6 10 L14.4 13.8" stroke="#8a6a14" stroke-width="3.6" stroke-linecap="butt"/><path d="M10.6 10 L14.2 13.6" stroke="url(#gGold)" stroke-width="2.4" stroke-linecap="butt"/><circle cx="6.4" cy="5.6" r="5.6" fill="url(#gGlass)" stroke="#9aa0aa" stroke-width="1.1"/><path d="M3.4 5.6h6" stroke="#4a6ea2" stroke-width="2"/></symbol>
<symbol id="z100" viewBox="0 0 16 16" overflow="visible"><rect x="3.5" y="0.5" width="12" height="7.4" fill="#fff" stroke="#6a7a9c"/><text x="4.6" y="6.8" font-family="Liberation Sans, sans-serif" font-weight="bold" font-size="7px" fill="#1a1a3a" textLength="10" lengthAdjust="spacingAndGlyphs">100</text><path d="M6.6 11.8 L9.2 14" stroke="#f08a1c" stroke-width="2.4" stroke-linecap="round"/><circle cx="3.9" cy="9.2" r="3.2" fill="url(#gGlass)" stroke="#9aa0aa" stroke-width="1"/></symbol>
<symbol id="grid" viewBox="0 0 16 16" overflow="visible"><rect x="0" y="1" width="16" height="13" fill="#fff"/><rect x="1" y="2" width="4" height="5" fill="#8e8e8e"/><rect x="6" y="2" width="4" height="5" fill="#8e8e8e"/><rect x="11" y="2" width="4" height="5" fill="#8a8a8a"/><rect x="1" y="8" width="4" height="5" fill="#767676"/><rect x="6" y="8" width="4" height="5" fill="#8a8a8a"/><rect x="11" y="8" width="4" height="5" fill="#dadada"/><rect x="1" y="2" width="14" height="11" fill="url(#gCellHi)"/></symbol>
<symbol id="A" viewBox="0 0 16 16" overflow="visible"><text x="1.4" y="13" font-family="Liberation Serif, serif" font-weight="bold" font-size="16px" fill="#2a4a9c">A</text></symbol>
<symbol id="Abrush" viewBox="0 0 16 16" overflow="visible"><text x="0.4" y="11" font-family="Liberation Sans, sans-serif" font-size="13px" fill="#3a7ad6">A</text><rect x="10.5" y="0.5" width="3" height="3" fill="#dfe8f8" stroke="#5a8ad0" stroke-width="0.9"/><path d="M15 4 L11 10" stroke="#f4e020" stroke-width="2.2" stroke-linecap="round"/><path d="M10.6 10 L4.4 13.8 L9 14 Z" fill="#3a7ad6"/><path d="M10 10.4 L7.4 12.4" stroke="#fff" stroke-width="1.2"/></symbol>
<symbol id="sq1" viewBox="0 0 16 16" overflow="visible"><rect x="0.5" y="1.5" width="6" height="6" fill="url(#gGray)" stroke="#c2c2c2" stroke-width="0.8"/><path d="M6.5 2.0V7.5H1.0" stroke="#a0a0a0" stroke-width="0.8" fill="none"/><rect x="8.5" y="8.5" width="6" height="6" fill="url(#gGray)" stroke="#c2c2c2" stroke-width="0.8"/><path d="M14.5 9.0V14.5H9.0" stroke="#a0a0a0" stroke-width="0.8" fill="none"/><rect x="3.5" y="3.5" width="8" height="8" fill="url(#gGray)" stroke="#c2c2c2" stroke-width="0.8"/><path d="M11.5 4.0V11.5H4.0" stroke="#a0a0a0" stroke-width="0.8" fill="none"/></symbol>
<symbol id="sq2" viewBox="0 0 16 16" overflow="visible"><rect x="4" y="5" width="5.5" height="5.5" fill="url(#gGray)" stroke="#c2c2c2" stroke-width="0.8"/><path d="M9.5 5.5V10.5H4.5" stroke="#a0a0a0" stroke-width="0.8" fill="none"/><rect x="6.5" y="2.5" width="5" height="5" fill="url(#gGray)" stroke="#c2c2c2" stroke-width="0.8"/><path d="M11.5 3.0V7.5H7.0" stroke="#a0a0a0" stroke-width="0.8" fill="none"/><rect x="0.5" y="0.5" width="6" height="6" fill="url(#gGray)" stroke="#c2c2c2" stroke-width="0.8"/><path d="M6.5 1.0V6.5H1.0" stroke="#a0a0a0" stroke-width="0.8" fill="none"/><rect x="8.5" y="8" width="6" height="6" fill="url(#gGray)" stroke="#c2c2c2" stroke-width="0.8"/><path d="M14.5 8.5V14H9.0" stroke="#a0a0a0" stroke-width="0.8" fill="none"/></symbol>
<symbol id="pic" viewBox="0 0 16 16" overflow="visible"><rect x="0.5" y="1.5" width="14.5" height="13" rx="1.3" fill="#fff" stroke="#9c9c9c"/><rect x="2" y="3" width="11.6" height="10" fill="url(#gSky)"/><path d="M2 7.4 Q4 6.6 6 8 T10 9.4 T13.6 10.6 V11 H2Z" fill="#2a6e40"/><path d="M2 9 Q6 9.6 13.6 10.4 V11.4 H2Z" fill="#2f7c5a" opacity="0.8"/><rect x="2" y="10.8" width="11.6" height="2.2" fill="url(#gWater)"/></symbol>
<symbol id="play" viewBox="0 0 16 16" overflow="visible"><path d="M4.6 2 L11.6 7.5 L4.6 13 Z" fill="url(#gPlay)" stroke="#1a5a1a" stroke-width="0.6"/></symbol>
<symbol id="stop" viewBox="0 0 16 16" overflow="visible"><rect x="4.5" y="3.5" width="8" height="8" fill="url(#gGray)" stroke="#c4c4c4" stroke-width="0.8"/><path d="M12.6 4v7.6H5" stroke="#a2a2a2" stroke-width="0.8" fill="none"/></symbol>
<symbol id="pause" viewBox="0 0 16 16" overflow="visible"><rect x="5.5" y="3.5" width="2" height="8.6" fill="#d2d2d2" stroke="#bcbcbc" stroke-width="0.7"/><rect x="9.5" y="3.5" width="2" height="8.6" fill="#d2d2d2" stroke="#bcbcbc" stroke-width="0.7"/></symbol>
<symbol id="clip" viewBox="0 0 16 16" overflow="visible"><rect x="0.5" y="1.5" width="11" height="12" rx="1" fill="url(#gClip)" stroke="#a0781c" stroke-width="0.9"/><rect x="3.5" y="0.3" width="5" height="2.6" rx="0.8" fill="#c8a040" stroke="#7a5a10" stroke-width="0.7"/><rect x="5.5" y="5.5" width="10" height="9" fill="#fff" stroke="#5a7ab8"/><rect x="6" y="6.6" width="9" height="1" fill="#7aa0e8"/><path d="M7 10.8l1-1.4 1.2 1.4 1.2-1.4 1.2 1.4 1.2-1.4 1 1.4" stroke="#e03030" stroke-width="0.9" fill="none"/><path d="M7 12.6h7" stroke="#a8bce0" stroke-width="0.9"/><path d="M15.5 6.4v8.2H6" stroke="#3a5a94" stroke-width="1" fill="none"/></symbol>
<symbol id="doc" viewBox="0 0 16 16" overflow="visible"><rect x="2.5" y="1.5" width="11" height="12" fill="#fff" stroke="#7a9ada"/><rect x="3" y="2" width="10" height="2.4" fill="#4f86e0"/><path d="M4.4 6.5h7.2M4.4 8.5h7.2M4.4 10.5h7.2" stroke="#7e8698" stroke-width="1.1"/><path d="M13.5 2v11.5H3" stroke="#3a5a9a" stroke-width="1" fill="none"/><path d="M3.4 14.3h10.8" stroke="#6a7a98" stroke-width="0.7" opacity="0.7"/></symbol>
<symbol id="clip123" viewBox="0 0 16 16" overflow="visible"><rect x="0.5" y="1.5" width="11" height="12" rx="1" fill="url(#gClip)" stroke="#a0781c" stroke-width="0.9"/><rect x="3.5" y="0.3" width="5" height="2.6" rx="0.8" fill="#c8a040" stroke="#7a5a10" stroke-width="0.7"/><rect x="3" y="6" width="13" height="8.6" fill="#fff" stroke="#3c5c98"/><text x="3.9" y="13.2" font-family="Liberation Serif, serif" font-weight="bold" font-size="8.8px" fill="#000" textLength="11.4" lengthAdjust="spacingAndGlyphs">123</text></symbol>
<symbol id="gfolder" viewBox="0 0 16 16" overflow="visible"><path d="M1.5 5.4 H8 L9 4.6 H15.5 V14.5 H1.5 Z" fill="url(#gGray)" stroke="#c8c8c8" stroke-width="0.8"/><path d="M15.6 5V14.6H1.6" stroke="#9a9a9a" stroke-width="1" fill="none"/><path d="M0.8 2.4 H5 V0.6 L8.4 3.4 L5 6.2 V4.4 H0.8 Z" fill="#cdcdcd" stroke="#b0b0b0" stroke-width="0.5"/><circle cx="13" cy="11.6" r="0.8" fill="#f4f4f4" stroke="#aaa" stroke-width="0.4"/></symbol>
<symbol id="al1" viewBox="0 0 16 16" overflow="visible"><rect x="2.3" y="1.9" width="1.8" height="11.8" fill="#585858"/><rect x="5.6" y="2.8" width="5" height="1.9" fill="#f6f6f6" stroke="#bdbdbd" stroke-width="0.7"/><rect x="5.6" y="6.5" width="8" height="3" fill="#f6f6f6" stroke="#bdbdbd" stroke-width="0.7"/><path d="M12 12L5.4 12" stroke="#585858" stroke-width="1"/><path d="M5.4 12L7.6 10.3L7.6 13.7Z" fill="#585858"/></symbol>
<symbol id="al2" viewBox="0 0 16 16" overflow="visible"><rect x="2.6" y="3.8" width="11.6" height="2.7" fill="#f6f6f6" stroke="#bdbdbd" stroke-width="0.7"/><rect x="4.7" y="10.3" width="8.2" height="2.7" fill="#f6f6f6" stroke="#bdbdbd" stroke-width="0.7"/><rect x="7.3" y="0.3" width="2.6" height="1.7" fill="#585858"/><rect x="7.8" y="7.7" width="1.8" height="1.4" fill="#585858"/><rect x="7.3" y="13.9" width="2.6" height="1.8" fill="#585858"/></symbol>
<symbol id="al3" viewBox="0 0 16 16" overflow="visible"><rect x="12.2" y="1.6" width="2.1" height="12.3" fill="#585858"/><rect x="5.8" y="2.2" width="5.6" height="1.9" fill="#f6f6f6" stroke="#bdbdbd" stroke-width="0.7"/><rect x="2.8" y="6.3" width="8.6" height="2.8" fill="#f6f6f6" stroke="#bdbdbd" stroke-width="0.7"/><path d="M3.4 12.6L11.2 12.6" stroke="#585858" stroke-width="1"/><path d="M11.2 12.6L9.0 14.3L9.0 10.9Z" fill="#585858"/></symbol>
<symbol id="al4" viewBox="0 0 16 16" overflow="visible"><rect x="2" y="2" width="12" height="1.8" fill="#585858"/><rect x="3.3" y="4.6" width="2.3" height="5" fill="#f6f6f6" stroke="#bdbdbd" stroke-width="0.7"/><rect x="6.6" y="4.6" width="3" height="8.4" fill="#f6f6f6" stroke="#bdbdbd" stroke-width="0.7"/><path d="M12.6 11.6L12.6 4.8" stroke="#585858" stroke-width="1"/><path d="M12.6 4.8L14.3 7.0L10.9 7.0Z" fill="#585858"/></symbol>
<symbol id="al5" viewBox="0 0 16 16" overflow="visible"><rect x="3.6" y="1.4" width="2.8" height="11.6" fill="#f6f6f6" stroke="#bdbdbd" stroke-width="0.7"/><rect x="8.9" y="3.3" width="3.4" height="8.2" fill="#f6f6f6" stroke="#bdbdbd" stroke-width="0.7"/><rect x="-0.2" y="6.6" width="1.8" height="2.4" fill="#585858"/><rect x="6.9" y="6.9" width="1.3" height="1.8" fill="#585858"/><rect x="14" y="6.6" width="1.8" height="2.4" fill="#585858"/></symbol>
<symbol id="al6" viewBox="0 0 16 16" overflow="visible"><rect x="1.9" y="12.2" width="12" height="1.8" fill="#585858"/><rect x="3" y="5.2" width="2.4" height="6.3" fill="#f6f6f6" stroke="#bdbdbd" stroke-width="0.7"/><rect x="6.3" y="2.6" width="3" height="8.9" fill="#f6f6f6" stroke="#bdbdbd" stroke-width="0.7"/><path d="M12.3 3.4L12.3 10.8" stroke="#585858" stroke-width="1"/><path d="M12.3 10.8L10.6 8.6L14.0 8.6Z" fill="#585858"/></symbol>

</defs></svg>
<div style="left:1px;top:0px;width:446px;height:18px;background:linear-gradient(to right,#0a246a,#a6caf0);"></div>
<div style="left:449px;top:0px;width:1px;height:634px;background:#808080;"></div>
<div style="left:450px;top:0px;width:1px;height:634px;background:#404040;"></div>
<div style="left:452px;top:0px;width:1px;height:634px;background:#fff;"></div>
<div style="left:455px;top:0px;width:446px;height:18px;background:linear-gradient(to right,#808080,#c0c0c0);"></div>
<div style="left:903px;top:0px;width:1px;height:634px;background:#808080;"></div>
<div style="left:904px;top:0px;width:1px;height:634px;background:#404040;"></div>
<svg class="ic" style="left:3px;top:1px" width="16" height="16" viewBox="0 0 16 16"><use href="#appL"/></svg>
<svg class="ic" style="left:457px;top:1px" width="16" height="16" viewBox="0 0 16 16"><use href="#appR"/></svg>
<div class="ttl" style="left:21px;top:2px;color:#fff">Harmonic Distortion Plot:THDN vs VOUT : F = 1K</div>
<div class="ttl" style="left:475px;top:2px;color:#d4d0c8;letter-spacing:0.14px">Harmonic Distortion Analysis</div>
<div class="cb" style="left:395px;top:2px"><svg width="16" height="14" viewBox="0 0 16 14" shape-rendering="crispEdges"><rect x="4" y="9" width="6" height="2" fill="#000"/></svg></div>
<div class="cb" style="left:411px;top:2px"><svg width="16" height="14" viewBox="0 0 16 14" shape-rendering="crispEdges"><path d="M3 2h9v9h-9zM4 4v6h7v-6z" fill="#000" fill-rule="evenodd"/></svg></div>
<div class="cb" style="left:429px;top:2px"><svg width="16" height="14" viewBox="0 0 16 14" shape-rendering="crispEdges"><path d="M4 3h2v1h1v1h2v-1h1v-1h2v1h-1v1h-1v1h-1v1h1v1h1v1h1v1h-2v-1h-1v-1h-2v1h-1v1h-2v-1h1v-1h1v-1h1v-1h-1v-1h-1v-1h-1z" fill="#000"/></svg></div>
<div class="cb" style="left:849px;top:2px"><svg width="16" height="14" viewBox="0 0 16 14" shape-rendering="crispEdges"><rect x="4" y="9" width="6" height="2" fill="#000"/></svg></div>
<div class="cb" style="left:865px;top:2px"><svg width="16" height="14" viewBox="0 0 16 14" shape-rendering="crispEdges"><path d="M3 2h9v9h-9zM4 4v6h7v-6z" fill="#000" fill-rule="evenodd"/></svg></div>
<div class="cb" style="left:883px;top:2px"><svg width="16" height="14" viewBox="0 0 16 14" shape-rendering="crispEdges"><path d="M4 3h2v1h1v1h2v-1h1v-1h2v1h-1v1h-1v1h-1v1h1v1h1v1h1v1h-2v-1h-1v-1h-2v1h-1v1h-2v-1h1v-1h1v-1h1v-1h-1v-1h-1v-1h-1z" fill="#000"/></svg></div>
<div style="left:1px;top:132px;width:445px;height:502px;background:#808080;"></div>
<div style="left:2px;top:133px;width:443px;height:501px;background:#404040;"></div>
<div style="left:3px;top:134px;width:442px;height:500px;background:#fff;"></div>
<div style="left:446px;top:132px;width:1px;height:502px;background:#fff;"></div>
<div style="left:445px;top:133px;width:1px;height:501px;background:#d4d0c8;"></div>
<div style="left:455px;top:132px;width:445px;height:502px;background:#808080;"></div>
<div style="left:456px;top:133px;width:443px;height:501px;background:#000;"></div>
<div style="left:457px;top:134px;width:442px;height:500px;background:#fff;"></div>
<div style="left:900px;top:132px;width:1px;height:502px;background:#fff;"></div>
<div style="left:899px;top:133px;width:1px;height:501px;background:#d4d0c8;"></div>
<div style="left:6px;top:47px;width:436px;height:1px;background:#808080;"></div>
<div style="left:6px;top:48px;width:436px;height:1px;background:#fff;"></div>
<div style="left:6px;top:75px;width:436px;height:1px;background:#808080;"></div>
<div style="left:6px;top:76px;width:436px;height:1px;background:#fff;"></div>
<div style="left:6px;top:103px;width:436px;height:1px;background:#808080;"></div>
<div style="left:6px;top:104px;width:436px;height:1px;background:#fff;"></div>
<div style="left:460px;top:47px;width:436px;height:1px;background:#808080;"></div>
<div style="left:460px;top:48px;width:436px;height:1px;background:#fff;"></div>
<div style="left:460px;top:75px;width:436px;height:1px;background:#808080;"></div>
<div style="left:460px;top:76px;width:436px;height:1px;background:#fff;"></div>
<div style="left:460px;top:103px;width:436px;height:1px;background:#808080;"></div>
<div style="left:460px;top:104px;width:436px;height:1px;background:#fff;"></div>
<svg class="ic" style="left:7px;top:25px" width="16" height="16" viewBox="0 0 16 16"><use href="#arrow"/></svg>
<svg class="ic" style="left:30px;top:25px" width="16" height="16" viewBox="0 0 16 16"><use href="#hand"/></svg>
<svg class="ic" style="left:53px;top:25px" width="16" height="16" viewBox="0 0 16 16"><use href="#shapes"/></svg>
<svg class="ic" style="left:77px;top:33px" width="7" height="4" viewBox="0 0 7 4" shape-rendering="crispEdges"><path d="M0 0h5v1h-5zM1 1h3v1h-3zM2 2h1v1h-1z" fill="#000"/></svg>
<div class="chk" style="left:86px;top:22px"></div>
<svg class="ic" style="left:90px;top:26px" width="16" height="16" viewBox="0 0 16 16"><use href="#zoomwin"/></svg>
<svg class="ic" style="left:112px;top:25px" width="16" height="16" viewBox="0 0 16 16"><use href="#chartgrid"/></svg>
<svg class="ic" style="left:135px;top:25px" width="16" height="16" viewBox="0 0 16 16"><use href="#panx"/></svg>
<svg class="ic" style="left:158px;top:25px" width="16" height="16" viewBox="0 0 16 16"><use href="#pany"/></svg>
<svg class="ic" style="left:181px;top:25px" width="16" height="16" viewBox="0 0 16 16"><use href="#panxy"/></svg>
<svg class="ic" style="left:204px;top:25px" width="16" height="16" viewBox="0 0 16 16"><use href="#fx"/></svg>
<svg class="ic" style="left:227px;top:25px" width="16" height="16" viewBox="0 0 16 16"><use href="#T"/></svg>
<div style="left:249px;top:24px;width:1px;height:19px;background:#808080;"></div>
<div style="left:250px;top:24px;width:1px;height:19px;background:#fff;"></div>
<svg class="ic" style="left:255px;top:25px" width="16" height="16" viewBox="0 0 16 16"><use href="#props"/></svg>
<div style="left:277px;top:24px;width:1px;height:19px;background:#808080;"></div>
<div style="left:278px;top:24px;width:1px;height:19px;background:#fff;"></div>
<div class="chk" style="left:280px;top:22px"></div>
<svg class="ic" style="left:284px;top:26px" width="16" height="16" viewBox="0 0 16 16"><use href="#pts1"/></svg>
<svg class="ic" style="left:306px;top:25px" width="16" height="16" viewBox="0 0 16 16"><use href="#pts2"/></svg>
<div style="left:328px;top:24px;width:1px;height:19px;background:#808080;"></div>
<div style="left:329px;top:24px;width:1px;height:19px;background:#fff;"></div>
<svg class="ic" style="left:334px;top:25px" width="16" height="16" viewBox="0 0 16 16"><use href="#frame1"/></svg>
<svg class="ic" style="left:357px;top:25px" width="16" height="16" viewBox="0 0 16 16"><use href="#frame2"/></svg>
<div style="left:379px;top:24px;width:1px;height:19px;background:#808080;"></div>
<div style="left:380px;top:24px;width:1px;height:19px;background:#fff;"></div>
<div class="chk" style="left:4px;top:50px"></div>
<svg class="ic" style="left:8px;top:54px" width="16" height="16" viewBox="0 0 16 16"><use href="#bars4"/></svg>
<div class="chk" style="left:27px;top:50px"></div>
<svg class="ic" style="left:31px;top:54px" width="16" height="16" viewBox="0 0 16 16"><use href="#hbars"/></svg>
<svg class="ic" style="left:53px;top:53px" width="16" height="16" viewBox="0 0 16 16"><use href="#bars3"/></svg>
<div class="chk" style="left:73px;top:50px"></div>
<svg class="ic" style="left:77px;top:54px" width="16" height="16" viewBox="0 0 16 16"><use href="#bars2"/></svg>
<div style="left:98px;top:52px;width:1px;height:19px;background:#808080;"></div>
<div style="left:99px;top:52px;width:1px;height:19px;background:#fff;"></div>
<svg class="ic" style="left:104px;top:53px" width="16" height="16" viewBox="0 0 16 16"><use href="#hline"/></svg>
<svg class="ic" style="left:127px;top:53px" width="16" height="16" viewBox="0 0 16 16"><use href="#cross"/></svg>
<div style="left:149px;top:52px;width:1px;height:19px;background:#808080;"></div>
<div style="left:150px;top:52px;width:1px;height:19px;background:#fff;"></div>
<svg class="ic" style="left:155px;top:53px" width="16" height="16" viewBox="0 0 16 16"><use href="#bx"/></svg>
<svg class="ic" style="left:178px;top:53px" width="16" height="16" viewBox="0 0 16 16"><use href="#by"/></svg>
<svg class="ic" style="left:201px;top:53px" width="16" height="16" viewBox="0 0 16 16"><use href="#bfx"/></svg>
<svg class="ic" style="left:224px;top:53px" width="16" height="16" viewBox="0 0 16 16"><use href="#blines_g"/></svg>
<div style="left:246px;top:52px;width:1px;height:19px;background:#808080;"></div>
<div style="left:247px;top:52px;width:1px;height:19px;background:#fff;"></div>
<div class="chk" style="left:4px;top:78px"></div>
<svg class="ic" style="left:8px;top:82px" width="16" height="16" viewBox="0 0 16 16"><use href="#c1"/></svg>
<svg class="ic" style="left:30px;top:81px" width="16" height="16" viewBox="0 0 16 16"><use href="#c2"/></svg>
<svg class="ic" style="left:53px;top:81px" width="16" height="16" viewBox="0 0 16 16"><use href="#c3"/></svg>
<svg class="ic" style="left:76px;top:81px" width="16" height="16" viewBox="0 0 16 16"><use href="#c4"/></svg>
<svg class="ic" style="left:99px;top:81px" width="16" height="16" viewBox="0 0 16 16"><use href="#c5"/></svg>
<svg class="ic" style="left:122px;top:81px" width="16" height="16" viewBox="0 0 16 16"><use href="#c6"/></svg>
<svg class="ic" style="left:145px;top:81px" width="16" height="16" viewBox="0 0 16 16"><use href="#c7"/></svg>
<svg class="ic" style="left:168px;top:81px" width="16" height="16" viewBox="0 0 16 16"><use href="#c8"/></svg>
<svg class="ic" style="left:191px;top:81px" width="16" height="16" viewBox="0 0 16 16"><use href="#c9"/></svg>
<div style="left:213px;top:80px;width:1px;height:19px;background:#808080;"></div>
<div style="left:214px;top:80px;width:1px;height:19px;background:#fff;"></div>
<div class="chk" style="left:216px;top:78px"></div>
<svg class="ic" style="left:220px;top:82px" width="16" height="16" viewBox="0 0 16 16"><use href="#fith"/></svg>
<div class="chk" style="left:239px;top:78px"></div>
<svg class="ic" style="left:243px;top:82px" width="16" height="16" viewBox="0 0 16 16"><use href="#fitv"/></svg>
<div style="left:264px;top:80px;width:1px;height:19px;background:#808080;"></div>
<div style="left:265px;top:80px;width:1px;height:19px;background:#fff;"></div>
<svg class="ic" style="left:270px;top:81px" width="16" height="16" viewBox="0 0 16 16"><use href="#zin"/></svg>
<svg class="ic" style="left:293px;top:81px" width="16" height="16" viewBox="0 0 16 16"><use href="#zout"/></svg>
<svg class="ic" style="left:316px;top:81px" width="16" height="16" viewBox="0 0 16 16"><use href="#z100"/></svg>
<div style="left:338px;top:80px;width:1px;height:19px;background:#808080;"></div>
<div style="left:339px;top:80px;width:1px;height:19px;background:#fff;"></div>
<svg class="ic" style="left:344px;top:81px" width="16" height="16" viewBox="0 0 16 16"><use href="#grid"/></svg>
<svg class="ic" style="left:368px;top:89px" width="7" height="4" viewBox="0 0 7 4" shape-rendering="crispEdges"><path d="M1 1h5v1h-5zM2 2h3v1h-3zM3 3h1v1h-1z" fill="#fff"/><path d="M0 0h5v1h-5zM1 1h3v1h-3zM2 2h1v1h-1z" fill="#808080"/></svg>
<svg class="ic" style="left:380px;top:81px" width="16" height="16" viewBox="0 0 16 16"><use href="#A"/></svg>
<svg class="ic" style="left:403px;top:81px" width="16" height="16" viewBox="0 0 16 16"><use href="#Abrush"/></svg>
<svg class="ic" style="left:427px;top:89px" width="7" height="4" viewBox="0 0 7 4" shape-rendering="crispEdges"><path d="M0 0h5v1h-5zM1 1h3v1h-3zM2 2h1v1h-1z" fill="#000"/></svg>
<div style="left:438px;top:80px;width:1px;height:19px;background:#808080;"></div>
<div style="left:439px;top:80px;width:1px;height:19px;background:#fff;"></div>
<svg class="ic" style="left:7px;top:109px" width="16" height="16" viewBox="0 0 16 16"><use href="#sq1"/></svg>
<svg class="ic" style="left:30px;top:109px" width="16" height="16" viewBox="0 0 16 16"><use href="#sq2"/></svg>
<svg class="ic" style="left:461px;top:25px" width="16" height="16" viewBox="0 0 16 16"><use href="#arrow"/></svg>
<svg class="ic" style="left:484px;top:25px" width="16" height="16" viewBox="0 0 16 16"><use href="#hand"/></svg>
<svg class="ic" style="left:507px;top:25px" width="16" height="16" viewBox="0 0 16 16"><use href="#shapes"/></svg>
<svg class="ic" style="left:531px;top:33px" width="7" height="4" viewBox="0 0 7 4" shape-rendering="crispEdges"><path d="M0 0h5v1h-5zM1 1h3v1h-3zM2 2h1v1h-1z" fill="#000"/></svg>
<svg class="ic" style="left:543px;top:25px" width="16" height="16" viewBox="0 0 16 16"><use href="#pic"/></svg>
<div class="chk" style="left:563px;top:22px"></div>
<svg class="ic" style="left:567px;top:26px" width="16" height="16" viewBox="0 0 16 16"><use href="#zoomwin"/></svg>
<svg class="ic" style="left:589px;top:25px" width="16" height="16" viewBox="0 0 16 16"><use href="#chartgrid"/></svg>
<svg class="ic" style="left:612px;top:25px" width="16" height="16" viewBox="0 0 16 16"><use href="#panx"/></svg>
<svg class="ic" style="left:635px;top:25px" width="16" height="16" viewBox="0 0 16 16"><use href="#pany"/></svg>
<svg class="ic" style="left:658px;top:25px" width="16" height="16" viewBox="0 0 16 16"><use href="#panxy"/></svg>
<svg class="ic" style="left:681px;top:25px" width="16" height="16" viewBox="0 0 16 16"><use href="#fx"/></svg>
<svg class="ic" style="left:704px;top:25px" width="16" height="16" viewBox="0 0 16 16"><use href="#T"/></svg>
<div style="left:726px;top:24px;width:1px;height:19px;background:#808080;"></div>
<div style="left:727px;top:24px;width:1px;height:19px;background:#fff;"></div>
<svg class="ic" style="left:732px;top:25px" width="16" height="16" viewBox="0 0 16 16"><use href="#props"/></svg>
<div style="left:754px;top:24px;width:1px;height:19px;background:#808080;"></div>
<div style="left:755px;top:24px;width:1px;height:19px;background:#fff;"></div>
<svg class="ic" style="left:760px;top:25px" width="16" height="16" viewBox="0 0 16 16"><use href="#play"/></svg>
<svg class="ic" style="left:783px;top:25px" width="16" height="16" viewBox="0 0 16 16"><use href="#stop"/></svg>
<svg class="ic" style="left:806px;top:25px" width="16" height="16" viewBox="0 0 16 16"><use href="#pause"/></svg>
<div style="left:828px;top:24px;width:1px;height:19px;background:#808080;"></div>
<div style="left:829px;top:24px;width:1px;height:19px;background:#fff;"></div>
<svg class="ic" style="left:834px;top:25px" width="16" height="16" viewBox="0 0 16 16"><use href="#pts1"/></svg>
<svg class="ic" style="left:857px;top:25px" width="16" height="16" viewBox="0 0 16 16"><use href="#pts2"/></svg>
<div style="left:879px;top:24px;width:1px;height:19px;background:#808080;"></div>
<div style="left:880px;top:24px;width:1px;height:19px;background:#fff;"></div>
<svg class="ic" style="left:461px;top:53px" width="16" height="16" viewBox="0 0 16 16"><use href="#frame1"/></svg>
<svg class="ic" style="left:484px;top:53px" width="16" height="16" viewBox="0 0 16 16"><use href="#frame2"/></svg>
<div style="left:506px;top:52px;width:1px;height:19px;background:#808080;"></div>
<div style="left:507px;top:52px;width:1px;height:19px;background:#fff;"></div>
<div class="chk" style="left:509px;top:50px"></div>
<svg class="ic" style="left:513px;top:54px" width="16" height="16" viewBox="0 0 16 16"><use href="#bars4"/></svg>
<div class="chk" style="left:532px;top:50px"></div>
<svg class="ic" style="left:536px;top:54px" width="16" height="16" viewBox="0 0 16 16"><use href="#hbars"/></svg>
<svg class="ic" style="left:558px;top:53px" width="16" height="16" viewBox="0 0 16 16"><use href="#bars3"/></svg>
<svg class="ic" style="left:581px;top:53px" width="16" height="16" viewBox="0 0 16 16"><use href="#bars2"/></svg>
<div style="left:603px;top:52px;width:1px;height:19px;background:#808080;"></div>
<div style="left:604px;top:52px;width:1px;height:19px;background:#fff;"></div>
<svg class="ic" style="left:609px;top:53px" width="16" height="16" viewBox="0 0 16 16"><use href="#hline"/></svg>
<svg class="ic" style="left:632px;top:53px" width="16" height="16" viewBox="0 0 16 16"><use href="#cross"/></svg>
<div style="left:654px;top:52px;width:1px;height:19px;background:#808080;"></div>
<div style="left:655px;top:52px;width:1px;height:19px;background:#fff;"></div>
<svg class="ic" style="left:660px;top:53px" width="16" height="16" viewBox="0 0 16 16"><use href="#bx"/></svg>
<svg class="ic" style="left:683px;top:53px" width="16" height="16" viewBox="0 0 16 16"><use href="#by"/></svg>
<svg class="ic" style="left:706px;top:53px" width="16" height="16" viewBox="0 0 16 16"><use href="#bfx"/></svg>
<svg class="ic" style="left:729px;top:53px" width="16" height="16" viewBox="0 0 16 16"><use href="#blines_r"/></svg>
<div style="left:751px;top:52px;width:1px;height:19px;background:#808080;"></div>
<div style="left:752px;top:52px;width:1px;height:19px;background:#fff;"></div>
<svg class="ic" style="left:757px;top:53px" width="16" height="16" viewBox="0 0 16 16"><use href="#table"/></svg>
<div style="left:779px;top:52px;width:1px;height:19px;background:#808080;"></div>
<div style="left:780px;top:52px;width:1px;height:19px;background:#fff;"></div>
<div class="chk" style="left:458px;top:78px"></div>
<svg class="ic" style="left:462px;top:82px" width="16" height="16" viewBox="0 0 16 16"><use href="#c1"/></svg>
<svg class="ic" style="left:484px;top:81px" width="16" height="16" viewBox="0 0 16 16"><use href="#c2"/></svg>
<svg class="ic" style="left:507px;top:81px" width="16" height="16" viewBox="0 0 16 16"><use href="#c3"/></svg>
<svg class="ic" style="left:530px;top:81px" width="16" height="16" viewBox="0 0 16 16"><use href="#c4"/></svg>
<svg class="ic" style="left:553px;top:81px" width="16" height="16" viewBox="0 0 16 16"><use href="#c5"/></svg>
<svg class="ic" style="left:576px;top:81px" width="16" height="16" viewBox="0 0 16 16"><use href="#c6"/></svg>
<svg class="ic" style="left:599px;top:81px" width="16" height="16" viewBox="0 0 16 16"><use href="#c7"/></svg>
<svg class="ic" style="left:622px;top:81px" width="16" height="16" viewBox="0 0 16 16"><use href="#c8"/></svg>
<svg class="ic" style="left:645px;top:81px" width="16" height="16" viewBox="0 0 16 16"><use href="#c9"/></svg>
<svg class="ic" style="left:668px;top:81px" width="16" height="16" viewBox="0 0 16 16"><use href="#c10"/></svg>
<svg class="ic" style="left:691px;top:81px" width="16" height="16" viewBox="0 0 16 16"><use href="#c11"/></svg>
<div style="left:713px;top:80px;width:1px;height:19px;background:#808080;"></div>
<div style="left:714px;top:80px;width:1px;height:19px;background:#fff;"></div>
<svg class="ic" style="left:719px;top:81px" width="16" height="16" viewBox="0 0 16 16"><use href="#clip"/></svg>
<svg class="ic" style="left:743px;top:89px" width="7" height="4" viewBox="0 0 7 4" shape-rendering="crispEdges"><path d="M0 0h5v1h-5zM1 1h3v1h-3zM2 2h1v1h-1z" fill="#000"/></svg>
<div style="left:754px;top:80px;width:1px;height:19px;background:#808080;"></div>
<div style="left:755px;top:80px;width:1px;height:19px;background:#fff;"></div>
<svg class="ic" style="left:760px;top:81px" width="16" height="16" viewBox="0 0 16 16"><use href="#doc"/></svg>
<div style="left:782px;top:80px;width:1px;height:19px;background:#808080;"></div>
<div style="left:783px;top:80px;width:1px;height:19px;background:#fff;"></div>
<svg class="ic" style="left:788px;top:81px" width="16" height="16" viewBox="0 0 16 16"><use href="#clip123"/></svg>
<div style="left:810px;top:80px;width:1px;height:19px;background:#808080;"></div>
<div style="left:811px;top:80px;width:1px;height:19px;background:#fff;"></div>
<div class="chk" style="left:813px;top:78px"></div>
<svg class="ic" style="left:817px;top:82px" width="16" height="16" viewBox="0 0 16 16"><use href="#fith"/></svg>
<div class="chk" style="left:836px;top:78px"></div>
<svg class="ic" style="left:840px;top:82px" width="16" height="16" viewBox="0 0 16 16"><use href="#fitv"/></svg>
<div style="left:861px;top:80px;width:1px;height:19px;background:#808080;"></div>
<div style="left:862px;top:80px;width:1px;height:19px;background:#fff;"></div>
<svg class="ic" style="left:461px;top:109px" width="16" height="16" viewBox="0 0 16 16"><use href="#zin"/></svg>
<svg class="ic" style="left:484px;top:109px" width="16" height="16" viewBox="0 0 16 16"><use href="#zout"/></svg>
<svg class="ic" style="left:507px;top:109px" width="16" height="16" viewBox="0 0 16 16"><use href="#z100"/></svg>
<div style="left:529px;top:108px;width:1px;height:19px;background:#808080;"></div>
<div style="left:530px;top:108px;width:1px;height:19px;background:#fff;"></div>
<svg class="ic" style="left:535px;top:109px" width="16" height="16" viewBox="0 0 16 16"><use href="#grid"/></svg>
<svg class="ic" style="left:559px;top:117px" width="7" height="4" viewBox="0 0 7 4" shape-rendering="crispEdges"><path d="M1 1h5v1h-5zM2 2h3v1h-3zM3 3h1v1h-1z" fill="#fff"/><path d="M0 0h5v1h-5zM1 1h3v1h-3zM2 2h1v1h-1z" fill="#808080"/></svg>
<svg class="ic" style="left:571px;top:109px" width="16" height="16" viewBox="0 0 16 16"><use href="#A"/></svg>
<svg class="ic" style="left:594px;top:109px" width="16" height="16" viewBox="0 0 16 16"><use href="#Abrush"/></svg>
<svg class="ic" style="left:618px;top:117px" width="7" height="4" viewBox="0 0 7 4" shape-rendering="crispEdges"><path d="M0 0h5v1h-5zM1 1h3v1h-3zM2 2h1v1h-1z" fill="#000"/></svg>
<div style="left:629px;top:108px;width:1px;height:19px;background:#808080;"></div>
<div style="left:630px;top:108px;width:1px;height:19px;background:#fff;"></div>
<svg class="ic" style="left:635px;top:109px" width="16" height="16" viewBox="0 0 16 16"><use href="#gfolder"/></svg>
<div style="left:657px;top:108px;width:1px;height:19px;background:#808080;"></div>
<div style="left:658px;top:108px;width:1px;height:19px;background:#fff;"></div>
<svg class="ic" style="left:663px;top:109px" width="16" height="16" viewBox="0 0 16 16"><use href="#sq1"/></svg>
<svg class="ic" style="left:686px;top:109px" width="16" height="16" viewBox="0 0 16 16"><use href="#sq2"/></svg>
<div style="left:708px;top:108px;width:1px;height:19px;background:#808080;"></div>
<div style="left:709px;top:108px;width:1px;height:19px;background:#fff;"></div>
<svg class="ic" style="left:714px;top:109px" width="16" height="16" viewBox="0 0 16 16"><use href="#al1"/></svg>
<svg class="ic" style="left:737px;top:109px" width="16" height="16" viewBox="0 0 16 16"><use href="#al2"/></svg>
<svg class="ic" style="left:760px;top:109px" width="16" height="16" viewBox="0 0 16 16"><use href="#al3"/></svg>
<svg class="ic" style="left:783px;top:109px" width="16" height="16" viewBox="0 0 16 16"><use href="#al4"/></svg>
<svg class="ic" style="left:806px;top:109px" width="16" height="16" viewBox="0 0 16 16"><use href="#al5"/></svg>
<svg class="ic" style="left:829px;top:109px" width="16" height="16" viewBox="0 0 16 16"><use href="#al6"/></svg>
<div style="left:457px;top:622px;width:442px;height:12px;background:#d4d0c8;"></div>
<div style="left:463px;top:622px;width:77px;height:1px;background:#000;"></div>
<div style="left:586px;top:622px;width:297px;height:1px;background:#000;"></div>
<div style="left:457px;top:622px;width:1px;height:12px;background:#fff;"></div>
<div class="sb" style="left:464px;top:623px"><svg width="15" height="11" viewBox="0 0 15 11" shape-rendering="crispEdges"><path d="M4 7h7v1h-7zM5 8h5v1h-5zM6 9h3v1h-3zM7 10h1v1h-1z"/></svg></div>
<div class="sb" style="left:479px;top:623px"><svg width="15" height="11" viewBox="0 0 15 11" shape-rendering="crispEdges"><path d="M4 3h2v7h-2zM10 3h1v1h-1zM9 4h2v1h-2zM8 5h3v1h-3zM7 6h4v1h-4zM8 7h3v1h-3zM9 8h2v1h-2zM10 9h1v1h-1z"/></svg></div>
<div class="sb" style="left:494px;top:623px"><svg width="15" height="11" viewBox="0 0 15 11" shape-rendering="crispEdges"><path d="M9 3h1v1h-1zM8 4h2v1h-2zM7 5h3v1h-3zM6 6h4v1h-4zM7 7h3v1h-3zM8 8h2v1h-2zM9 9h1v1h-1z"/></svg></div>
<div class="sb" style="left:509px;top:623px"><svg width="15" height="11" viewBox="0 0 15 11" shape-rendering="crispEdges"><path d="M4 3h1v1h-1zM4 4h2v1h-2zM4 5h3v1h-3zM4 6h4v1h-4zM4 7h3v1h-3zM4 8h2v1h-2zM4 9h1v1h-1z"/></svg></div>
<div class="sb" style="left:524px;top:623px"><svg width="15" height="11" viewBox="0 0 15 11" shape-rendering="crispEdges"><path d="M4 3h1v1h-1zM4 4h2v1h-2zM4 5h3v1h-3zM4 6h4v1h-4zM4 7h3v1h-3zM4 8h2v1h-2zM4 9h1v1h-1zM9 3h2v7h-2z"/></svg></div>
<div style="left:463px;top:622px;width:1px;height:12px;background:#000;"></div>
<div style="left:883px;top:622px;width:16px;height:7px;background:#000;"></div>
<div style="left:883px;top:622px;width:15px;height:6px;background:#fff;"></div>
<div style="left:885px;top:624px;width:13px;height:4px;background:#808080;"></div>
<div style="left:885px;top:624px;width:12px;height:3px;background:#d4d0c8;"></div>
<svg width="906" height="634" viewBox="0 0 906 634" style="left:0;top:0;pointer-events:none">
<g shape-rendering="crispEdges" fill="none" stroke="#808080" stroke-width="1">
<line x1="93.5" y1="152" x2="93.5" y2="587" stroke-dasharray="3 3"/>
<line x1="127.5" y1="152" x2="127.5" y2="587" stroke-dasharray="3 3"/>
<line x1="162.5" y1="152" x2="162.5" y2="587" stroke-dasharray="3 3"/>
<line x1="207.5" y1="152" x2="207.5" y2="587" stroke-dasharray="3 3"/>
<line x1="241.5" y1="152" x2="241.5" y2="587" stroke-dasharray="3 3"/>
<line x1="276.5" y1="152" x2="276.5" y2="587" stroke-dasharray="3 3"/>
<line x1="321.5" y1="152" x2="321.5" y2="587" stroke-dasharray="3 3"/>
<line x1="355.5" y1="152" x2="355.5" y2="587" stroke-dasharray="3 3"/>
<line x1="390.5" y1="152" x2="390.5" y2="587" stroke-dasharray="3 3"/>
<line x1="410.5" y1="152" x2="410.5" y2="587" stroke-dasharray="3 3"/>
<line x1="49" y1="174.5" x2="418" y2="174.5" stroke-dasharray="3 3"/>
<line x1="49" y1="217.5" x2="418" y2="217.5" stroke-dasharray="3 3"/>
<line x1="49" y1="274.5" x2="418" y2="274.5" stroke-dasharray="3 3"/>
<line x1="49" y1="316.5" x2="418" y2="316.5" stroke-dasharray="3 3"/>
<line x1="49" y1="359.5" x2="418" y2="359.5" stroke-dasharray="3 3"/>
<line x1="49" y1="415.5" x2="418" y2="415.5" stroke-dasharray="3 3"/>
<line x1="49" y1="458.5" x2="418" y2="458.5" stroke-dasharray="3 3"/>
<line x1="49" y1="501.5" x2="418" y2="501.5" stroke-dasharray="3 3"/>
<line x1="49" y1="557.5" x2="418" y2="557.5" stroke-dasharray="3 3"/>
<rect x="48.5" y="151.5" width="370" height="436" stroke="#808080"/>
</g>
<g font-family="Liberation Sans, sans-serif" font-size="10px" fill="#0000ff" letter-spacing="0.4" text-rendering="geometricPrecision">
<text x="7.1" y="155" text-anchor="start" >14.63</text>
<text x="7.1" y="178" text-anchor="start" >10</text>
<text x="7.1" y="221" text-anchor="start" >5</text>
<text x="7.1" y="278" text-anchor="start" >2</text>
<text x="7.1" y="320" text-anchor="start" >1</text>
<text x="7.1" y="363" text-anchor="start" >500<tspan font-size="10.8px">m</tspan></text>
<text x="7.1" y="419" text-anchor="start" >200<tspan font-size="10.8px">m</tspan></text>
<text x="7.1" y="462" text-anchor="start" >100<tspan font-size="10.8px">m</tspan></text>
<text x="7.1" y="505" text-anchor="start" >50<tspan font-size="10.8px">m</tspan></text>
<text x="7.1" y="561" text-anchor="start" >20<tspan font-size="10.8px">m</tspan></text>
<text x="93.7" y="598" text-anchor="middle" >5<tspan font-size="10.8px">m</tspan></text>
<text x="127.7" y="598" text-anchor="middle" >10<tspan font-size="10.8px">m</tspan></text>
<text x="162.7" y="598" text-anchor="middle" >20<tspan font-size="10.8px">m</tspan></text>
<text x="207.7" y="598" text-anchor="middle" >50<tspan font-size="10.8px">m</tspan></text>
<text x="241.7" y="598" text-anchor="middle" >100<tspan font-size="10.8px">m</tspan></text>
<text x="276.7" y="598" text-anchor="middle" >200<tspan font-size="10.8px">m</tspan></text>
<text x="321.7" y="598" text-anchor="middle" >500<tspan font-size="10.8px">m</tspan></text>
<text x="355.7" y="598" text-anchor="middle" >1</text>
<text x="390.7" y="598" text-anchor="middle" >2</text>
<text x="410.7" y="598" text-anchor="middle" >3</text>
<text x="177.5" y="148" text-anchor="start" textLength="112" letter-spacing="0">THDN vs VOUT : F = 1K</text>
<text x="48.5" y="611" text-anchor="start" textLength="45.8" letter-spacing="0">THDN (%)</text>
<text x="158" y="624" text-anchor="start" textLength="45.5" letter-spacing="0">VOUT (V)</text>
</g>
<rect x="48" y="612" width="46" height="1" fill="#0000ff" shape-rendering="crispEdges"/>
<polyline fill="none" stroke="#0000ff" stroke-width="2.3" points="80,178 100,203 120,228 140,253 160,278 180,303 200,328 221,353 241,378 261,403 281,428 301,453 321,478 341,502 361,527 381,552 388,560"/>
<circle cx="80" cy="178" r="3.3" fill="#fff" stroke="#0000ff" stroke-width="0.95"/>
<circle cx="100" cy="203" r="3.3" fill="#fff" stroke="#0000ff" stroke-width="0.95"/>
<circle cx="120" cy="228" r="3.3" fill="#fff" stroke="#0000ff" stroke-width="0.95"/>
<circle cx="140" cy="253" r="3.3" fill="#fff" stroke="#0000ff" stroke-width="0.95"/>
<circle cx="160" cy="278" r="3.3" fill="#fff" stroke="#0000ff" stroke-width="0.95"/>
<circle cx="180" cy="303" r="3.3" fill="#fff" stroke="#0000ff" stroke-width="0.95"/>
<circle cx="200" cy="328" r="3.3" fill="#fff" stroke="#0000ff" stroke-width="0.95"/>
<circle cx="221" cy="353" r="3.3" fill="#fff" stroke="#0000ff" stroke-width="0.95"/>
<circle cx="241" cy="378" r="3.3" fill="#fff" stroke="#0000ff" stroke-width="0.95"/>
<circle cx="261" cy="403" r="3.3" fill="#fff" stroke="#0000ff" stroke-width="0.95"/>
<circle cx="281" cy="428" r="3.3" fill="#fff" stroke="#0000ff" stroke-width="0.95"/>
<circle cx="301" cy="453" r="3.3" fill="#fff" stroke="#0000ff" stroke-width="0.95"/>
<circle cx="321" cy="478" r="3.3" fill="#fff" stroke="#0000ff" stroke-width="0.95"/>
<circle cx="341" cy="502" r="3.3" fill="#fff" stroke="#0000ff" stroke-width="0.95"/>
<circle cx="361" cy="527" r="3.3" fill="#fff" stroke="#0000ff" stroke-width="0.95"/>
<circle cx="381" cy="552" r="3.3" fill="#fff" stroke="#0000ff" stroke-width="0.95"/>
<circle cx="388" cy="560" r="3.3" fill="#fff" stroke="#0000ff" stroke-width="0.95"/>
<g shape-rendering="crispEdges" fill="none" stroke="#808080" stroke-width="1">
<line x1="536.5" y1="152" x2="536.5" y2="571" stroke-dasharray="3 3"/>
<line x1="572.5" y1="152" x2="572.5" y2="571" stroke-dasharray="3 3"/>
<line x1="609.5" y1="152" x2="609.5" y2="571" stroke-dasharray="3 3"/>
<line x1="646.5" y1="152" x2="646.5" y2="571" stroke-dasharray="3 3"/>
<line x1="683.5" y1="152" x2="683.5" y2="571" stroke-dasharray="3 3"/>
<line x1="719.5" y1="152" x2="719.5" y2="571" stroke-dasharray="3 3"/>
<line x1="756.5" y1="152" x2="756.5" y2="571" stroke-dasharray="3 3"/>
<line x1="793.5" y1="152" x2="793.5" y2="571" stroke-dasharray="3 3"/>
<line x1="829.5" y1="152" x2="829.5" y2="571" stroke-dasharray="3 3"/>
<line x1="866.5" y1="152" x2="866.5" y2="571" stroke-dasharray="3 3"/>
<line x1="506" y1="154.5" x2="872" y2="154.5" stroke-dasharray="3 3"/>
<line x1="506" y1="174.5" x2="872" y2="174.5" stroke-dasharray="3 3"/>
<line x1="506" y1="207.5" x2="872" y2="207.5" stroke-dasharray="3 3"/>
<line x1="506" y1="241.5" x2="872" y2="241.5" stroke-dasharray="3 3"/>
<line x1="506" y1="275.5" x2="872" y2="275.5" stroke-dasharray="3 3"/>
<line x1="506" y1="308.5" x2="872" y2="308.5" stroke-dasharray="3 3"/>
<line x1="506" y1="342.5" x2="872" y2="342.5" stroke-dasharray="3 3"/>
<line x1="506" y1="376.5" x2="872" y2="376.5" stroke-dasharray="3 3"/>
<line x1="506" y1="409.5" x2="872" y2="409.5" stroke-dasharray="3 3"/>
<line x1="506" y1="443.5" x2="872" y2="443.5" stroke-dasharray="3 3"/>
<line x1="506" y1="476.5" x2="872" y2="476.5" stroke-dasharray="3 3"/>
<line x1="506" y1="510.5" x2="872" y2="510.5" stroke-dasharray="3 3"/>
<line x1="506" y1="543.5" x2="872" y2="543.5" stroke-dasharray="3 3"/>
<line x1="506" y1="567.5" x2="872" y2="567.5" stroke-dasharray="3 3"/>
<rect x="505.5" y="151.5" width="367" height="420" stroke="#808080"/>
</g>
<g font-family="Liberation Sans, sans-serif" font-size="10px" fill="#0000ff" letter-spacing="0.4" text-rendering="geometricPrecision">
<text x="461.4" y="158" text-anchor="start" >400</text>
<text x="461.4" y="178" text-anchor="start" >100</text>
<text x="461.4" y="211" text-anchor="start" >10</text>
<text x="461.4" y="245" text-anchor="start" >1</text>
<text x="461.4" y="279" text-anchor="start" >100<tspan font-size="10.8px">m</tspan></text>
<text x="461.4" y="312" text-anchor="start" >10<tspan font-size="10.8px">m</tspan></text>
<text x="461.4" y="346" text-anchor="start" >1<tspan font-size="10.8px">m</tspan></text>
<text x="461.4" y="380" text-anchor="start" >100u</text>
<text x="461.4" y="413" text-anchor="start" >10u</text>
<text x="461.4" y="447" text-anchor="start" >1u</text>
<text x="461.4" y="480" text-anchor="start" >100n</text>
<text x="461.4" y="514" text-anchor="start" >10n</text>
<text x="461.4" y="547" text-anchor="start" >1n</text>
<text x="461.4" y="571" text-anchor="start" >200p</text>
<text x="516.7" y="582" text-anchor="middle" >0.2K</text>
<text x="572.7" y="582" text-anchor="middle" >2.0K</text>
<text x="609.7" y="582" text-anchor="middle" >3.0K</text>
<text x="646.7" y="582" text-anchor="middle" >4.0K</text>
<text x="683.7" y="582" text-anchor="middle" >5.0K</text>
<text x="719.7" y="582" text-anchor="middle" >6.0K</text>
<text x="756.7" y="582" text-anchor="middle" >7.0K</text>
<text x="793.7" y="582" text-anchor="middle" >8.0K</text>
<text x="829.7" y="582" text-anchor="middle" >9.0K</text>
<text x="872.7" y="582" text-anchor="middle" >10.2K</text>
<text x="599.5" y="148" text-anchor="start" textLength="177.6" letter-spacing="0">Cy-XXI_v711.cir F=1K VIN=.01m...5m</text>
<text x="505.3" y="595" text-anchor="start" textLength="84" letter-spacing="0">HARM(V(RLOAD))</text>
<text x="623.4" y="608" text-anchor="start" textLength="27.4" letter-spacing="0">F (Hz)</text>
</g>
<rect x="505" y="596" width="84" height="1" fill="#0000ff" shape-rendering="crispEdges"/>
<g fill="none" stroke-width="2" stroke-linejoin="miter" shape-rendering="crispEdges">
<path stroke="#ff0000" stroke-width="2.4" d="M536.1 322.0L572.6 483.6"/>
<polyline stroke="#ff0000" points="572.3,483.6 609.5,489.1 646.5,492.5 683.5,496.0 719.5,499.0 756.0,501.0 793.0,502.9 829.5,504.9 872.0,506.9"/>
<path stroke="#008000" stroke-width="2.4" d="M536.1 316.8L572.6 477.5"/>
<polyline stroke="#008000" points="572.3,477.5 609.5,483.0 646.5,486.5 683.5,490.0 719.5,493.0 756.0,495.0 793.0,497.0 829.5,499.0 872.0,501.0"/>
<path stroke="#0000ff" stroke-width="2.4" d="M536.1 311.3L572.6 471.5"/>
<polyline stroke="#0000ff" points="572.3,471.5 609.5,477.2 646.5,480.9 683.5,484.5 719.5,487.7 756.0,489.7 793.0,491.8 829.5,493.9 872.0,496.0"/>
<path stroke="#ff00ff" stroke-width="2.4" d="M536.1 305.5L572.6 465.7"/>
<polyline stroke="#ff00ff" points="572.3,465.7 609.5,471.4 646.5,475.0 683.5,478.6 719.5,481.7 756.0,483.8 793.0,485.9 829.5,487.9 872.0,490.0"/>
<path stroke="#ff8000" stroke-width="2.4" d="M536.1 299.3L572.6 460.0"/>
<polyline stroke="#ff8000" points="572.3,460.0 609.5,465.6 646.5,469.2 683.5,472.8 719.5,475.8 756.0,477.9 793.0,479.9 829.5,482.0 872.0,484.0"/>
<path stroke="#008080" stroke-width="2.4" d="M536.1 293.2L572.6 454.1"/>
<polyline stroke="#008080" points="572.3,454.1 609.5,459.7 646.5,463.2 683.5,466.8 719.5,469.8 756.0,471.8 793.0,473.8 829.5,475.9 872.0,477.9"/>
<path stroke="#800080" stroke-width="2.4" d="M536.1 287.2L572.6 448.4"/>
<polyline stroke="#800080" points="572.3,448.4 609.5,453.9 646.5,457.4 683.5,460.8 719.5,463.8 756.0,465.8 793.0,467.8 829.5,469.8 872.0,471.8"/>
<path stroke="#400080" stroke-width="2.4" d="M536.1 281.2L572.6 442.8"/>
<polyline stroke="#400080" points="572.3,442.8 609.5,448.3 646.5,451.7 683.5,455.2 719.5,458.2 756.0,460.2 793.0,462.1 829.5,464.1 872.0,466.1"/>
<path stroke="#00ff60" stroke-width="2.4" d="M536.1 275.2L572.6 436.7"/>
<polyline stroke="#00ff60" points="572.3,436.7 609.5,442.2 646.5,445.6 683.5,449.1 719.5,452.1 756.0,454.1 793.0,456.0 829.5,458.0 872.0,460.0"/>
<path stroke="#ff0000" stroke-width="2.4" d="M536.1 269.3L572.6 431.0"/>
<polyline stroke="#ff0000" points="572.3,431.0 609.5,436.4 646.5,439.8 683.5,443.3 719.5,446.2 756.0,448.2 793.0,450.2 829.5,452.1 872.0,454.1"/>
<path stroke="#ff8000" stroke-width="2.4" d="M536.1 263.3L572.6 424.9"/>
<polyline stroke="#ff8000" points="572.3,424.9 609.5,430.3 646.5,433.7 683.5,437.2 719.5,440.1 756.0,442.1 793.0,444.1 829.5,446.0 872.0,448.0"/>
<path stroke="#ffff00" stroke-width="2.4" d="M536.1 257.2L572.6 418.9"/>
<polyline stroke="#ffff00" points="572.3,418.9 609.5,424.3 646.5,427.7 683.5,431.2 719.5,434.1 756.0,436.1 793.0,438.1 829.5,440.0 872.0,442.0"/>
<path stroke="#6060ff" stroke-width="2.4" d="M536.1 252.0L572.6 413.6"/>
<polyline stroke="#6060ff" points="572.3,413.6 609.5,418.9 646.5,422.3 683.5,425.7 719.5,428.6 756.0,430.5 793.0,432.4 829.5,434.4 872.0,436.3"/>
<path stroke="#ff00ff" stroke-width="2.4" d="M536.1 246.6L572.6 407.6"/>
<polyline stroke="#ff00ff" points="572.3,407.6 609.5,412.9 646.5,416.3 683.5,419.6 719.5,422.5 756.0,424.4 793.0,426.4 829.5,428.3 872.0,430.2"/>
<path stroke="#8000a0" stroke-width="2.4" d="M536.1 240.1L572.6 402.9"/>
<polyline stroke="#8000a0" points="572.3,402.9 609.5,408.1 646.5,411.4 683.5,414.7 719.5,417.5 756.0,419.4 793.0,421.2 829.5,423.1 872.0,425.0"/>
<path stroke="#505050" stroke-width="2.4" d="M536.1 234.5L572.6 397.7"/>
<polyline stroke="#505050" points="572.3,397.7 609.5,402.5 646.5,405.6 683.5,408.7 719.5,411.4 756.0,413.1 793.0,414.9 829.5,416.6 872.0,418.4"/>
<path stroke="#4a86a8" stroke-width="2.4" d="M536.1 232.1L572.6 396.3"/>
<polyline stroke="#4a86a8" points="572.3,396.3 609.5,401.2 646.5,404.3 683.5,407.4 719.5,410.1 756.0,411.9 793.0,413.6 829.5,415.4 872.0,417.2"/>
</g>
<polygon points="540,622 586,622 580,634.5 546,634.5" fill="#fff"/>
<path d="M540.5 622.5 L546.5 634.5 M586 622.5 L580 634.5" stroke="#000" stroke-width="1.3" fill="none"/>
<text x="548" y="634.5" font-family="Liberation Sans, sans-serif" font-weight="bold" font-size="12px" fill="#000">MAIN</text>
</svg>
</body></html>
